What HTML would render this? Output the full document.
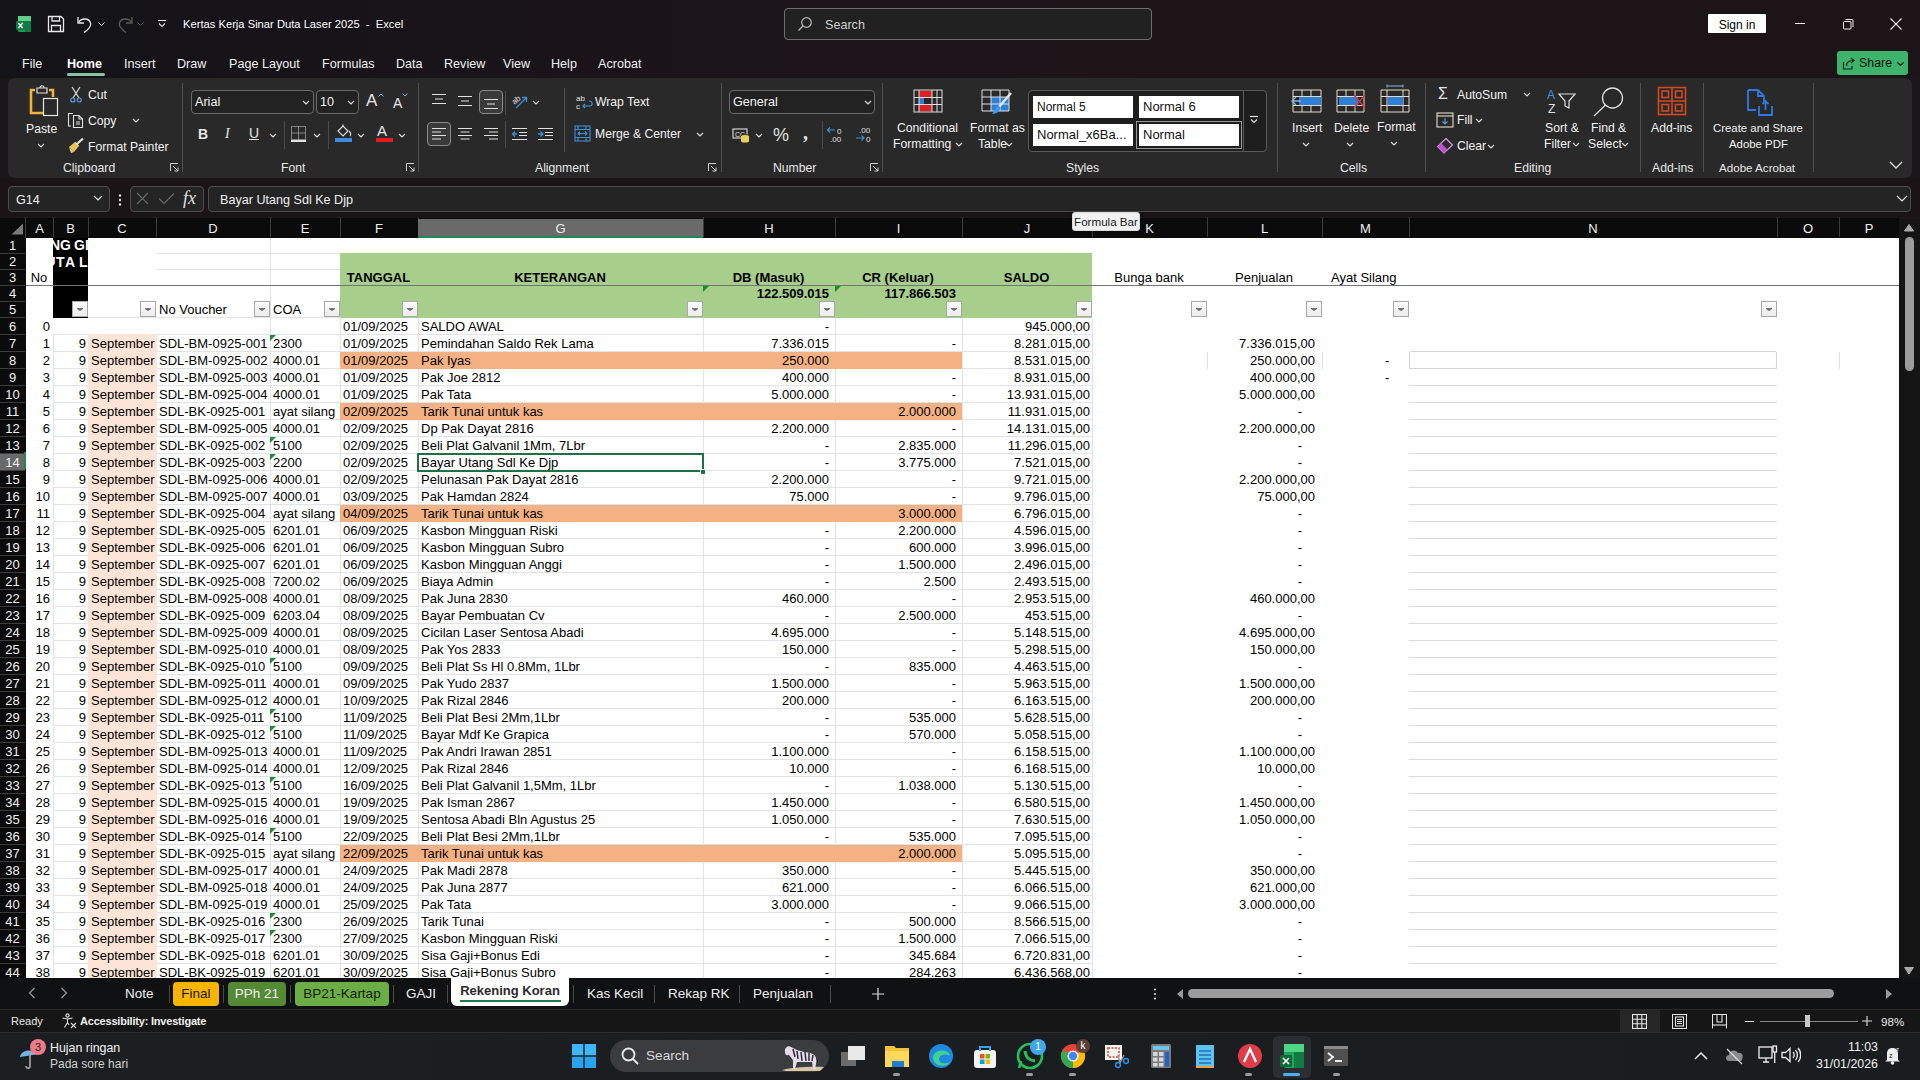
<!DOCTYPE html>
<html><head><meta charset="utf-8"><title>Excel</title>
<style>
*{box-sizing:border-box;margin:0;padding:0}
html,body{width:1920px;height:1080px;overflow:hidden;background:#1b1619;font-family:"Liberation Sans",sans-serif;}
.a{position:absolute}
#title{left:0;top:0;width:1920px;height:78px;background:linear-gradient(90deg,#131318 0%,#1a141a 30%,#1e1418 60%,#1d1418 100%)}
.tt{color:#fff;font-size:11.2px;white-space:nowrap}
.menu{color:#f0f0f0;font-size:12.6px;top:57px;white-space:nowrap}
#ribbon{left:8px;top:78px;width:1904px;height:100px;background:#292929;border-radius:7px}
.rt{color:#f2f2f2;font-size:12.2px;white-space:nowrap;line-height:14px}
.gl{color:#e8e8e8;font-size:12.2px;top:161px;white-space:nowrap;line-height:14px}
.vd{top:83px;width:1px;height:89px;background:#505050}
.chev{width:7px;height:4px}
#fbar{left:0;top:178px;width:1920px;height:39px;background:#1a1416}
.cell{position:absolute;font-size:13px;color:#000;white-space:nowrap;line-height:17px;overflow:hidden}
.r{text-align:right}
.c{text-align:center}
.hd{position:absolute;color:#f0f0f0;font-size:13px;text-align:center;line-height:18px;top:220px;height:18px}
.rh{position:absolute;left:0;width:25px;color:#f0f0f0;font-size:13px;text-align:center;background:#0b0b0b;border-bottom:1px solid #3c3c3c}
.gh{position:absolute;height:1px;background:#e2e3e6}
.gv{position:absolute;width:1px;background:#e2e3e6}
.af{position:absolute;width:16px;height:16px;background:linear-gradient(#fbfbfb,#ececec);border:1px solid #a8a8a8}
.af:after{content:"";position:absolute;left:4px;top:7px;width:0;height:0;border-left:3px solid transparent;border-right:3px solid transparent;border-top:2.5px solid #6a6a6a}
.af:before{content:"";position:absolute;left:4px;top:6px;width:6px;height:1px;background:#777}
.tri{position:absolute;width:0;height:0;border-top:6px solid #1e8a3a;border-right:6px solid transparent}
.tab{position:absolute;top:986px;font-size:13.5px;color:#f0f0f0;white-space:nowrap;line-height:16px}
.tsep{position:absolute;top:985px;width:1px;height:18px;background:#4a4a4a}

</style></head>
<body>
<div id="title" class="a">
 <!-- excel logo -->
 <svg class="a" style="left:16px;top:15px" width="16" height="18" viewBox="0 0 16 18">
  <rect x="2" y="1" width="13" height="16" rx="1.5" fill="#1f9d55"/>
  <rect x="2" y="1" width="13" height="5" fill="#5fd08a"/>
  <rect x="9" y="6" width="6" height="11" fill="#107c41"/>
  <rect x="0" y="6" width="9" height="9" rx="1" fill="#107c41"/>
  <path d="M2.3 8 L6.7 13 M6.7 8 L2.3 13" stroke="#fff" stroke-width="1.4"/>
 </svg>
 <!-- save -->
 <svg class="a" style="left:47px;top:15px" width="18" height="18" viewBox="0 0 18 18" fill="none" stroke="#e8e8e8" stroke-width="1.3">
  <path d="M1.5 1.5 H14 L16.5 4 V16.5 H1.5 Z"/><path d="M5 1.5 V6 H12.5 V1.5"/><path d="M4.5 16.5 V10.5 H13.5 V16.5"/>
 </svg>
 <!-- undo -->
 <svg class="a" style="left:76px;top:15px" width="18" height="18" viewBox="0 0 18 18" fill="none" stroke="#e8e8e8" stroke-width="1.3">
  <path d="M2 2 V8 H8"/><path d="M2.5 7.5 C5 3 13 2.5 14.5 8 C15.5 11 13 14 8 17.5"/>
 </svg>
 <svg class="a chev" style="left:98px;top:22px" viewBox="0 0 7 4"><path d="M0.5 0.5 L3.5 3.5 L6.5 0.5" stroke="#e0e0e0" fill="none" stroke-width="1"/></svg>
 <!-- redo -->
 <svg class="a" style="left:116px;top:15px" width="18" height="18" viewBox="0 0 18 18" fill="none" stroke="#5a5a5a" stroke-width="1.3">
  <path d="M16 2 V8 H10"/><path d="M15.5 7.5 C13 3 5 2.5 3.5 8 C2.5 11 5 14 10 17.5"/>
 </svg>
 <svg class="a chev" style="left:137px;top:22px" viewBox="0 0 7 4"><path d="M0.5 0.5 L3.5 3.5 L6.5 0.5" stroke="#5a5a5a" fill="none" stroke-width="1"/></svg>
 <!-- customize -->
 <svg class="a" style="left:157px;top:19px" width="10" height="10" viewBox="0 0 10 10" fill="none" stroke="#e0e0e0" stroke-width="1.1">
  <path d="M1 1.5 H9"/><path d="M2 4.5 L5 7.5 L8 4.5"/>
 </svg>
 <div class="a tt" style="left:183px;top:18px">Kertas Kerja Sinar Duta Laser 2025&nbsp;&nbsp;-&nbsp;&nbsp;Excel</div>
 <!-- search -->
 <div class="a" style="left:784px;top:8px;width:368px;height:32px;border:1px solid #6e6e6e;border-radius:4px;background:#212121"></div>
 <svg class="a" style="left:797px;top:16px" width="16" height="16" viewBox="0 0 16 16" fill="none" stroke="#bdbdbd" stroke-width="1.2">
  <circle cx="9.5" cy="6.5" r="4.8"/><path d="M6 10 L1.5 14.5"/>
 </svg>
 <div class="a tt" style="left:825px;top:18px;color:#cfcfcf;font-size:12.6px">Search</div>
 <!-- sign in -->
 <div class="a" style="left:1708px;top:14px;width:58px;height:19px;background:#fff;border-radius:1px"></div>
 <div class="a tt" style="left:1708px;top:18px;width:58px;text-align:center;color:#000;font-size:12px;line-height:15px">Sign in</div>
 <svg class="a" style="left:1793px;top:16px" width="14" height="14" viewBox="0 0 14 14"><path d="M2 7.5 H12" stroke="#eee" stroke-width="1"/></svg>
 <svg class="a" style="left:1841px;top:17px" width="14" height="14" viewBox="0 0 14 14" fill="none" stroke="#eee" stroke-width="1">
  <rect x="2.5" y="4.5" width="7.5" height="7.5" rx="1"/><path d="M4.5 2.5 H11 A1 1 0 0 1 12 3.5 V10"/>
 </svg>
 <svg class="a" style="left:1889px;top:17px" width="14" height="14" viewBox="0 0 14 14" stroke="#eee" stroke-width="1.1"><path d="M1.5 1.5 L12.5 12.5 M12.5 1.5 L1.5 12.5"/></svg>

 <!-- menu -->
 <div class="a menu" style="left:22px">File</div>
 <div class="a menu" style="left:67px;font-weight:bold;color:#fff">Home</div>
 <div class="a" style="left:67px;top:73px;width:38px;height:3px;border-radius:2px;background:#8cc2a4"></div>
 <div class="a menu" style="left:124px">Insert</div>
 <div class="a menu" style="left:177px">Draw</div>
 <div class="a menu" style="left:229px">Page Layout</div>
 <div class="a menu" style="left:322px">Formulas</div>
 <div class="a menu" style="left:396px">Data</div>
 <div class="a menu" style="left:444px">Review</div>
 <div class="a menu" style="left:503px">View</div>
 <div class="a menu" style="left:551px">Help</div>
 <div class="a menu" style="left:598px">Acrobat</div>
 <!-- share -->
 <div class="a" style="left:1837px;top:51px;width:71px;height:24px;background:#3db36b;border-radius:3px"></div>
 <svg class="a" style="left:1841px;top:55px" width="16" height="16" viewBox="0 0 16 16" fill="none" stroke="#10261a" stroke-width="1.2">
  <path d="M2.5 7 V14 H11 V11"/><path d="M5.5 11 C5.5 7 8.5 5.5 12 5.5"/><path d="M10 3 L13 5.5 L10 8"/>
 </svg>
 <div class="a tt" style="left:1859px;top:56px;color:#111;font-size:12.4px">Share</div>
 <svg class="a chev" style="left:1897px;top:62px" viewBox="0 0 7 4"><path d="M0.5 0.5 L3.5 3.5 L6.5 0.5" stroke="#111" fill="none" stroke-width="1.1"/></svg>
</div>

<div id="ribbon" class="a"></div>
<div id="ribbon-content">
 <!-- ===== Clipboard ===== -->
<svg class="a" style="left:28px;top:85px" width="32" height="34" viewBox="0 0 32 34">
 <path d="M7 5 H3 V28 H16" fill="none" stroke="#f0b43c" stroke-width="2.6"/>
 <path d="M21 5 H25 V12" fill="none" stroke="#f0b43c" stroke-width="2.6"/>
 <path d="M9 3 H19 V8 H9 Z" fill="none" stroke="#e0e0e0" stroke-width="1.2"/>
 <path d="M12 3 C12 0 16 0 16 3" fill="none" stroke="#e0e0e0" stroke-width="1.2"/>
 <rect x="15.5" y="13.5" width="14" height="17" fill="#292929" stroke="#e6e6e6" stroke-width="1.2"/>
</svg>
<div class="a rt" style="left:26px;top:122px">Paste</div>
<svg class="a" style="left:37px;top:143px" width="8" height="5" viewBox="0 0 8 5"><path d="M1 1 L4 4 L7 1" stroke="#ddd" fill="none" stroke-width="1.2"/></svg>
<svg class="a" style="left:70px;top:86px" width="12" height="17" viewBox="0 0 12 17" fill="none" stroke-width="1.2">
 <path d="M2 1 L9 12 M10 1 L3 12" stroke="#e0e0e0"/><circle cx="2.8" cy="14" r="2" stroke="#5aa0e0"/><circle cx="9.2" cy="14" r="2" stroke="#5aa0e0"/>
</svg>
<div class="a rt" style="left:88px;top:88px">Cut</div>
<svg class="a" style="left:67px;top:111px" width="18" height="18" viewBox="0 0 18 18" fill="none" stroke="#e0e0e0" stroke-width="1.1">
 <path d="M6 2.5 H1.5 V15 H4"/><path d="M6.5 4.5 H12 L15.5 8 V16.5 H6.5 Z"/><path d="M12 4.5 V8 H15.5"/><path d="M9 11 H13 M9 13 H13"/>
</svg>
<div class="a rt" style="left:88px;top:114px">Copy</div>
<svg class="a" style="left:132px;top:118px" width="8" height="5" viewBox="0 0 8 5"><path d="M1 1 L4 4 L7 1" stroke="#ddd" fill="none" stroke-width="1.2"/></svg>
<svg class="a" style="left:67px;top:137px" width="18" height="17" viewBox="0 0 18 17">
 <path d="M2 10 L8 5 L12 9 L7 15 Z" fill="#e8c25a"/><path d="M8 5 L12 9" stroke="#fff" stroke-width="1"/>
 <path d="M10 7 L16 1.5" stroke="#e0e0e0" stroke-width="2.2"/><path d="M2 10 L4 16 L7 15" fill="#f0d080"/>
</svg>
<div class="a rt" style="left:88px;top:140px">Format Painter</div>
<div class="a gl" style="left:63px">Clipboard</div>
<svg class="a" style="left:170px;top:163px" width="9" height="9" viewBox="0 0 9 9" fill="none" stroke="#cfcfcf" stroke-width="1"><path d="M0.5 8 V0.5 H8"/><path d="M3 3 L8 8 M8 4.5 V8 H4.5"/></svg>
<div class="a vd" style="left:182px"></div>

<!-- ===== Font ===== -->
<div class="a" style="left:191px;top:90px;width:123px;height:24px;border:1px solid #6a6a6a;border-radius:4px;background:#222"></div>
<div class="a rt" style="left:195px;top:95px;font-size:12.6px">Arial</div>
<svg class="a" style="left:302px;top:100px" width="8" height="5" viewBox="0 0 8 5"><path d="M1 1 L4 4 L7 1" stroke="#ddd" fill="none" stroke-width="1.2"/></svg>
<div class="a" style="left:316px;top:90px;width:43px;height:24px;border:1px solid #6a6a6a;border-radius:4px;background:#222"></div>
<div class="a rt" style="left:320px;top:95px;font-size:12.6px">10</div>
<svg class="a" style="left:347px;top:100px" width="8" height="5" viewBox="0 0 8 5"><path d="M1 1 L4 4 L7 1" stroke="#ddd" fill="none" stroke-width="1.2"/></svg>
<div class="a" style="left:366px;top:91px;font-size:17px;color:#e6e6e6;line-height:20px">A</div>
<svg class="a" style="left:378px;top:93px" width="6" height="4" viewBox="0 0 6 4"><path d="M0.5 3.5 L3 1 L5.5 3.5" stroke="#8ab4e0" fill="none" stroke-width="1"/></svg>
<div class="a" style="left:393px;top:94px;font-size:14px;color:#e6e6e6;line-height:18px">A</div>
<svg class="a" style="left:402px;top:93px" width="6" height="4" viewBox="0 0 6 4"><path d="M0.5 0.5 L3 3 L5.5 0.5" stroke="#8ab4e0" fill="none" stroke-width="1"/></svg>
<div class="a" style="left:198px;top:126px;font-size:14px;font-weight:bold;color:#e6e6e6;line-height:16px">B</div>
<div class="a" style="left:225px;top:126px;font-size:14px;font-style:italic;font-family:'Liberation Serif',serif;color:#e6e6e6;line-height:16px">I</div>
<div class="a" style="left:249px;top:125px;font-size:14px;color:#e6e6e6;line-height:16px;text-decoration:underline">U</div>
<svg class="a" style="left:269px;top:133px" width="8" height="5" viewBox="0 0 8 5"><path d="M1 1 L4 4 L7 1" stroke="#ddd" fill="none" stroke-width="1.2"/></svg>
<div class="a" style="left:284px;top:121px;width:1px;height:28px;background:#4a4a4a"></div>
<svg class="a" style="left:290px;top:125px" width="17" height="17" viewBox="0 0 17 17" fill="none" stroke="#d8d8d8" stroke-width="1" stroke-dasharray="1 1">
 <rect x="1.5" y="1.5" width="14" height="13"/><path d="M8.5 1.5 V14.5 M1.5 8 H15.5"/>
</svg>
<div class="a" style="left:291px;top:140px;width:15px;height:1.5px;background:#e0e0e0"></div>
<svg class="a" style="left:313px;top:133px" width="8" height="5" viewBox="0 0 8 5"><path d="M1 1 L4 4 L7 1" stroke="#ddd" fill="none" stroke-width="1.2"/></svg>
<div class="a" style="left:328px;top:121px;width:1px;height:28px;background:#4a4a4a"></div>
<svg class="a" style="left:335px;top:124px" width="18" height="14" viewBox="0 0 18 14" fill="none" stroke="#e0e0e0" stroke-width="1.1">
 <path d="M3 7 L8 2 L13 7 L8 12 Z"/><path d="M8 2 V0.5"/><path d="M14 7 C16 9 16 11 15 12"/>
</svg>
<div class="a" style="left:335px;top:138px;width:17px;height:4px;background:#3c8ee0"></div>
<svg class="a" style="left:357px;top:133px" width="8" height="5" viewBox="0 0 8 5"><path d="M1 1 L4 4 L7 1" stroke="#ddd" fill="none" stroke-width="1.2"/></svg>
<div class="a" style="left:377px;top:123px;font-size:15px;color:#e6e6e6;line-height:16px">A</div>
<div class="a" style="left:376px;top:138px;width:17px;height:4px;background:#e81c1c"></div>
<svg class="a" style="left:398px;top:133px" width="8" height="5" viewBox="0 0 8 5"><path d="M1 1 L4 4 L7 1" stroke="#ddd" fill="none" stroke-width="1.2"/></svg>
<div class="a gl" style="left:281px">Font</div>
<svg class="a" style="left:406px;top:163px" width="9" height="9" viewBox="0 0 9 9" fill="none" stroke="#cfcfcf" stroke-width="1"><path d="M0.5 8 V0.5 H8"/><path d="M3 3 L8 8 M8 4.5 V8 H4.5"/></svg>
<div class="a vd" style="left:418px"></div>

<!-- ===== Alignment ===== -->
<svg class="a" style="left:431px;top:93px" width="16" height="12" viewBox="0 0 16 12" stroke="#e0e0e0" stroke-width="1.1"><path d="M1 1.5 H15 M4 6 H12 M1 10.5 H15"/></svg>
<svg class="a" style="left:457px;top:95px" width="16" height="12" viewBox="0 0 16 12" stroke="#e0e0e0" stroke-width="1.1"><path d="M1 1.5 H15 M4 6 H12 M1 10.5 H15"/></svg>
<div class="a" style="left:479px;top:90px;width:24px;height:24px;border:1px solid #8a8a8a;border-radius:4px;background:#3a3a3a"></div>
<svg class="a" style="left:483px;top:98px" width="16" height="12" viewBox="0 0 16 12" stroke="#e0e0e0" stroke-width="1.1"><path d="M1 1.5 H15 M4 6 H12 M1 10.5 H15"/></svg>
<div class="a" style="left:505px;top:91px;width:1px;height:24px;background:#4a4a4a"></div>
<svg class="a" style="left:511px;top:92px" width="18" height="18" viewBox="0 0 18 18">
 <text x="1" y="10" font-size="8" font-family="Liberation Sans" fill="#e0e0e0" transform="rotate(-40 6 8)">ab</text>
 <path d="M5 16 L15 6 M11 5.5 H15.5 V10" stroke="#3d8fd8" stroke-width="1.3" fill="none"/>
</svg>
<svg class="a" style="left:532px;top:100px" width="8" height="5" viewBox="0 0 8 5"><path d="M1 1 L4 4 L7 1" stroke="#ddd" fill="none" stroke-width="1.2"/></svg>
<div class="a" style="left:427px;top:122px;width:24px;height:24px;border:1px solid #8a8a8a;border-radius:4px;background:#3a3a3a"></div>
<svg class="a" style="left:431px;top:127px" width="16" height="14" viewBox="0 0 16 14" stroke="#e0e0e0" stroke-width="1.1"><path d="M1 1.5 H15 M1 5 H10 M1 8.5 H15 M1 12 H10"/></svg>
<svg class="a" style="left:457px;top:127px" width="16" height="14" viewBox="0 0 16 14" stroke="#e0e0e0" stroke-width="1.1"><path d="M1 1.5 H15 M3.5 5 H12.5 M1 8.5 H15 M3.5 12 H12.5"/></svg>
<svg class="a" style="left:483px;top:127px" width="16" height="14" viewBox="0 0 16 14" stroke="#e0e0e0" stroke-width="1.1"><path d="M1 1.5 H15 M6 5 H15 M1 8.5 H15 M6 12 H15"/></svg>
<div class="a" style="left:505px;top:121px;width:1px;height:27px;background:#4a4a4a"></div>
<svg class="a" style="left:511px;top:127px" width="17" height="14" viewBox="0 0 17 14" fill="none" stroke-width="1.1"><path d="M1 1.5 H16 M8 5.5 H16 M8 8.5 H16 M1 12.5 H16" stroke="#e0e0e0"/><path d="M6 7 H1.5 M4 4.5 L1.5 7 L4 9.5" stroke="#3d8fd8" stroke-width="1.3"/></svg>
<svg class="a" style="left:537px;top:127px" width="17" height="14" viewBox="0 0 17 14" fill="none" stroke-width="1.1"><path d="M1 1.5 H16 M8 5.5 H16 M8 8.5 H16 M1 12.5 H16" stroke="#e0e0e0"/><path d="M1 7 H6 M3.5 4.5 L6 7 L3.5 9.5" stroke="#3d8fd8" stroke-width="1.3"/></svg>
<div class="a vd" style="left:564px;top:88px;height:64px"></div>
<svg class="a" style="left:576px;top:94px" width="18" height="17" viewBox="0 0 18 17">
 <text x="0" y="7" font-size="8" font-family="Liberation Sans" fill="#e0e0e0">ab</text><text x="0" y="15" font-size="8" font-family="Liberation Sans" fill="#e0e0e0">c</text>
 <path d="M7 12 H14 C17 12 17 7 13 7 M9 10 L7 12 L9 14" stroke="#3d8fd8" stroke-width="1.2" fill="none"/>
</svg>
<div class="a rt" style="left:595px;top:95px">Wrap Text</div>
<svg class="a" style="left:574px;top:125px" width="17" height="17" viewBox="0 0 17 17" fill="none" stroke="#3d8fd8" stroke-width="1.1">
 <rect x="1" y="1" width="15" height="15"/><path d="M1 4.5 H16 M1 12.5 H16 M4 4.5 V1 M12 4.5 V1 M4 12.5 V16 M12 12.5 V16"/><path d="M4 8.5 H13 M6 6.5 L4 8.5 L6 10.5 M11 6.5 L13 8.5 L11 10.5"/>
</svg>
<div class="a rt" style="left:595px;top:127px">Merge &amp; Center</div>
<svg class="a" style="left:696px;top:132px" width="8" height="5" viewBox="0 0 8 5"><path d="M1 1 L4 4 L7 1" stroke="#ddd" fill="none" stroke-width="1.2"/></svg>
<div class="a gl" style="left:535px">Alignment</div>
<svg class="a" style="left:708px;top:163px" width="9" height="9" viewBox="0 0 9 9" fill="none" stroke="#cfcfcf" stroke-width="1"><path d="M0.5 8 V0.5 H8"/><path d="M3 3 L8 8 M8 4.5 V8 H4.5"/></svg>
<div class="a vd" style="left:721px"></div>

<!-- ===== Number ===== -->
<div class="a" style="left:729px;top:90px;width:146px;height:24px;border:1px solid #6a6a6a;border-radius:4px;background:#222"></div>
<div class="a rt" style="left:733px;top:95px;font-size:12.6px">General</div>
<svg class="a" style="left:864px;top:100px" width="8" height="5" viewBox="0 0 8 5"><path d="M1 1 L4 4 L7 1" stroke="#ddd" fill="none" stroke-width="1.2"/></svg>
<svg class="a" style="left:732px;top:127px" width="18" height="16" viewBox="0 0 18 16" fill="none" stroke-width="1.1">
 <rect x="1" y="2" width="14" height="9" stroke="#e0e0e0"/><text x="3" y="9.5" font-size="7" font-family="Liberation Sans" fill="#e0e0e0" stroke="none">CC</text>
 <ellipse cx="13" cy="9" rx="4" ry="1.5" fill="#e8d060" stroke="#292929" stroke-width="0.8"/><rect x="9" y="9" width="8" height="5" fill="#e8d060"/><ellipse cx="13" cy="14" rx="4" ry="1.5" fill="#e8d060"/>
</svg>
<svg class="a" style="left:755px;top:133px" width="8" height="5" viewBox="0 0 8 5"><path d="M1 1 L4 4 L7 1" stroke="#ddd" fill="none" stroke-width="1.2"/></svg>
<div class="a" style="left:773px;top:125px;font-size:18px;color:#e0e0e0;line-height:20px">%</div>
<div class="a" style="left:803px;top:122px;font-size:20px;font-weight:bold;font-family:'Liberation Serif',serif;color:#e0e0e0;line-height:20px">,</div>
<div class="a" style="left:822px;top:121px;width:1px;height:28px;background:#4a4a4a"></div>
<svg class="a" style="left:826px;top:125px" width="20" height="18" viewBox="0 0 20 18">
 <path d="M9 5 H1.5 M4 2.5 L1.5 5 L4 7.5" stroke="#3d8fd8" stroke-width="1.2" fill="none"/>
 <text x="11" y="9" font-size="8" font-family="Liberation Sans" fill="#e0e0e0">0</text><text x="4" y="17" font-size="8" font-family="Liberation Sans" fill="#e0e0e0">.00</text>
</svg>
<svg class="a" style="left:855px;top:125px" width="20" height="18" viewBox="0 0 20 18">
 <text x="4" y="8" font-size="8" font-family="Liberation Sans" fill="#e0e0e0">.00</text>
 <path d="M1 13 H9 M6.5 10.5 L9 13 L6.5 15.5" stroke="#3d8fd8" stroke-width="1.2" fill="none"/>
 <text x="11" y="17" font-size="8" font-family="Liberation Sans" fill="#e0e0e0">0</text>
</svg>
<div class="a gl" style="left:773px">Number</div>
<svg class="a" style="left:870px;top:163px" width="9" height="9" viewBox="0 0 9 9" fill="none" stroke="#cfcfcf" stroke-width="1"><path d="M0.5 8 V0.5 H8"/><path d="M3 3 L8 8 M8 4.5 V8 H4.5"/></svg>
<div class="a vd" style="left:882px"></div>

<!-- ===== Styles ===== -->
<svg class="a" style="left:913px;top:89px" width="30" height="24" viewBox="0 0 30 24">
 <rect x="1" y="1" width="28" height="22" fill="#2a2a2a" stroke="#e0e0e0" stroke-width="1"/>
 <rect x="6" y="2" width="13" height="6" fill="#e02020"/><rect x="6" y="9" width="5" height="6" fill="#2d7fd8"/><rect x="12" y="9" width="7" height="6" fill="#292929"/><rect x="6" y="16" width="13" height="6" fill="#e02020"/>
 <path d="M1 8.5 H29 M1 15.5 H29 M6 1 V23 M19 1 V23 M24 1 V23" stroke="#e0e0e0" stroke-width="1"/>
</svg>
<div class="a rt" style="left:897px;top:121px">Conditional</div>
<div class="a rt" style="left:893px;top:137px">Formatting</div>
<svg class="a" style="left:955px;top:142px" width="8" height="5" viewBox="0 0 8 5"><path d="M1 1 L4 4 L7 1" stroke="#ddd" fill="none" stroke-width="1.2"/></svg>
<svg class="a" style="left:981px;top:89px" width="32" height="28" viewBox="0 0 32 28">
 <rect x="10" y="8" width="18" height="14" fill="#2d7fd8"/>
 <path d="M1 1 H28 V22 H1 Z M1 8 H28 M1 15 H28 M10 1 V22 M19 1 V22" stroke="#e0e0e0" stroke-width="1" fill="none"/>
 <path d="M30 4 L18 18" stroke="#e6e6e6" stroke-width="2.4"/><path d="M18 17 C14 18 14 22 11 25 C16 25 20 22 19 18 Z" fill="#3d9af0"/>
</svg>
<div class="a rt" style="left:970px;top:121px">Format as</div>
<div class="a rt" style="left:978px;top:137px">Table</div>
<svg class="a" style="left:1005px;top:142px" width="8" height="5" viewBox="0 0 8 5"><path d="M1 1 L4 4 L7 1" stroke="#ddd" fill="none" stroke-width="1.2"/></svg>
<div class="a" style="left:1028px;top:90px;width:239px;height:62px;border:1px solid #5a5a5a;border-radius:4px;background:#1e1e1e"></div>
<div class="a" style="left:1033px;top:96px;width:100px;height:22px;background:#fff"></div>
<div class="a" style="left:1037px;top:100px;font-size:12px;color:#111;line-height:14px">Normal 5</div>
<div class="a" style="left:1139px;top:96px;width:100px;height:22px;background:#fff"></div>
<div class="a" style="left:1143px;top:99px;font-size:13px;color:#111;line-height:16px">Normal 6</div>
<div class="a" style="left:1033px;top:124px;width:100px;height:22px;background:#fff"></div>
<div class="a" style="left:1037px;top:127px;font-size:13px;color:#111;line-height:16px;white-space:nowrap">Normal_x6Ba...</div>
<div class="a" style="left:1136px;top:121px;width:106px;height:28px;border:1px solid #9a9a9a"></div>
<div class="a" style="left:1139px;top:124px;width:100px;height:22px;background:#fff"></div>
<div class="a" style="left:1143px;top:127px;font-size:13px;color:#111;line-height:16px">Normal</div>
<div class="a" style="left:1243px;top:90px;width:1px;height:62px;background:#5a5a5a"></div>
<svg class="a" style="left:1249px;top:115px" width="10" height="10" viewBox="0 0 10 10" fill="none" stroke="#e0e0e0" stroke-width="1.2"><path d="M1 1.5 H9"/><path d="M2 4.5 L5 7.5 L8 4.5"/></svg>
<div class="a gl" style="left:1066px">Styles</div>
<div class="a vd" style="left:1277px"></div>

<!-- ===== Cells ===== -->
<svg class="a" style="left:1291px;top:89px" width="32" height="24" viewBox="0 0 32 24">
 <path d="M2 1 H30 V23 H2 Z M2 7.5 H30 M2 16.5 H30 M11 1 V23 M20 1 V23" stroke="#e8dcc8" stroke-width="1" fill="none"/>
 <rect x="8" y="8" width="22" height="8" fill="#2d7fd8"/><path d="M10 12 H1 M5 8 L1 12 L5 16" stroke="#8ab4e0" stroke-width="1.3" fill="none"/>
</svg>
<div class="a rt" style="left:1292px;top:121px">Insert</div>
<svg class="a" style="left:1302px;top:142px" width="8" height="5" viewBox="0 0 8 5"><path d="M1 1 L4 4 L7 1" stroke="#ddd" fill="none" stroke-width="1.2"/></svg>
<svg class="a" style="left:1336px;top:89px" width="32" height="24" viewBox="0 0 32 24">
 <path d="M1 1 H28 V23 H1 Z M1 7.5 H28 M1 16.5 H28 M10 1 V23 M19 1 V23" stroke="#e8dcc8" stroke-width="1" fill="none"/>
 <rect x="3" y="8" width="19" height="8" fill="#2d7fd8"/><path d="M18 6 L29 19 M29 6 L18 19" stroke="#e03040" stroke-width="1.3"/>
</svg>
<div class="a rt" style="left:1334px;top:121px">Delete</div>
<svg class="a" style="left:1346px;top:142px" width="8" height="5" viewBox="0 0 8 5"><path d="M1 1 L4 4 L7 1" stroke="#ddd" fill="none" stroke-width="1.2"/></svg>
<svg class="a" style="left:1380px;top:84px" width="30" height="29" viewBox="0 0 30 29">
 <path d="M7 2 H23 M7 0.5 V3.5 M23 0.5 V3.5" stroke="#8ab4e0" stroke-width="1"/>
 <path d="M1 6 H29 V28 H1 Z M1 12.5 H29 M1 21.5 H29 M7 6 V28 M23 6 V28" stroke="#e8dcc8" stroke-width="1" fill="none"/>
 <rect x="8" y="13" width="15" height="8" fill="#2d7fd8"/>
</svg>
<div class="a rt" style="left:1377px;top:120px">Format</div>
<svg class="a" style="left:1390px;top:141px" width="8" height="5" viewBox="0 0 8 5"><path d="M1 1 L4 4 L7 1" stroke="#ddd" fill="none" stroke-width="1.2"/></svg>
<div class="a gl" style="left:1340px">Cells</div>
<div class="a vd" style="left:1425px"></div>

<!-- ===== Editing ===== -->
<div class="a" style="left:1438px;top:85px;font-size:16px;color:#e6e6e6;line-height:18px">&#931;</div>
<div class="a rt" style="left:1457px;top:88px">AutoSum</div>
<svg class="a" style="left:1523px;top:92px" width="8" height="5" viewBox="0 0 8 5"><path d="M1 1 L4 4 L7 1" stroke="#ddd" fill="none" stroke-width="1.2"/></svg>
<svg class="a" style="left:1436px;top:112px" width="18" height="16" viewBox="0 0 18 16" fill="none" stroke-width="1.1">
 <rect x="1" y="1" width="16" height="14" stroke="#e8dcc8"/><path d="M1 4 H17" stroke="#e8dcc8"/><path d="M9 6 V12 M6.5 9.5 L9 12 L11.5 9.5" stroke="#5aa0e0"/>
</svg>
<div class="a rt" style="left:1457px;top:113px">Fill</div>
<svg class="a" style="left:1475px;top:118px" width="8" height="5" viewBox="0 0 8 5"><path d="M1 1 L4 4 L7 1" stroke="#ddd" fill="none" stroke-width="1.2"/></svg>
<svg class="a" style="left:1436px;top:137px" width="18" height="17" viewBox="0 0 18 17">
 <path d="M10 1.5 L16.5 8 L8 16 L1.5 9.5 Z" fill="none" stroke="#d8a0e8" stroke-width="1.1"/><path d="M5 6 L11.5 12.5 L8 16 L1.5 9.5 Z" fill="#c050d0"/>
</svg>
<div class="a rt" style="left:1457px;top:139px">Clear</div>
<svg class="a" style="left:1487px;top:144px" width="8" height="5" viewBox="0 0 8 5"><path d="M1 1 L4 4 L7 1" stroke="#ddd" fill="none" stroke-width="1.2"/></svg>
<svg class="a" style="left:1547px;top:87px" width="32" height="28" viewBox="0 0 32 28">
 <text x="0" y="12" font-size="12" font-family="Liberation Sans" fill="#4a90e0">A</text><text x="1" y="26" font-size="12" font-family="Liberation Sans" fill="#e0e0e0">Z</text>
 <path d="M12 7 H28 L22 14 V21 L18 19 V14 Z" fill="none" stroke="#e0e0e0" stroke-width="1.2"/>
</svg>
<div class="a rt" style="left:1545px;top:121px">Sort &amp;</div>
<div class="a rt" style="left:1544px;top:137px">Filter</div>
<svg class="a" style="left:1572px;top:142px" width="8" height="5" viewBox="0 0 8 5"><path d="M1 1 L4 4 L7 1" stroke="#ddd" fill="none" stroke-width="1.2"/></svg>
<svg class="a" style="left:1593px;top:86px" width="32" height="31" viewBox="0 0 32 31" fill="none" stroke="#e0e0e0" stroke-width="1.3">
 <circle cx="19.5" cy="12" r="10"/><path d="M12.5 19 L1 30"/>
</svg>
<div class="a rt" style="left:1591px;top:121px">Find &amp;</div>
<div class="a rt" style="left:1588px;top:137px">Select</div>
<svg class="a" style="left:1621px;top:142px" width="8" height="5" viewBox="0 0 8 5"><path d="M1 1 L4 4 L7 1" stroke="#ddd" fill="none" stroke-width="1.2"/></svg>
<div class="a gl" style="left:1514px">Editing</div>
<div class="a vd" style="left:1640px"></div>

<!-- ===== Add-ins ===== -->
<svg class="a" style="left:1657px;top:86px" width="30" height="30" viewBox="0 0 30 30" fill="none" stroke="#d04a24" stroke-width="1.6">
 <rect x="1.5" y="1.5" width="27" height="27"/><path d="M15 1.5 V28.5 M1.5 15 H28.5"/><rect x="5" y="5" width="6.5" height="6.5"/><rect x="18.5" y="5" width="6.5" height="6.5"/><rect x="5" y="18.5" width="6.5" height="6.5"/><rect x="18.5" y="18.5" width="6.5" height="6.5"/>
</svg>
<div class="a rt" style="left:1651px;top:121px">Add-ins</div>
<div class="a gl" style="left:1652px">Add-ins</div>
<div class="a vd" style="left:1703px"></div>

<!-- ===== Acrobat ===== -->
<svg class="a" style="left:1746px;top:88px" width="28" height="30" viewBox="0 0 28 30" fill="none" stroke="#2f78e0" stroke-width="1.8">
 <path d="M2 2 H12 L18 8 V15 M2 2 V22 H10"/><path d="M12 2 V8 H18"/><path d="M13 18 V27 H26 V18"/><path d="M19.5 22 V13 M16.5 16 L19.5 13 L22.5 16"/>
</svg>
<div class="a rt" style="left:1713px;top:121px;font-size:11.4px">Create and Share</div>
<div class="a rt" style="left:1729px;top:137px;font-size:11.4px">Adobe PDF</div>
<div class="a gl" style="left:1719px;font-size:11.6px">Adobe Acrobat</div>
<div class="a vd" style="left:1813px"></div>
<svg class="a" style="left:1889px;top:161px" width="14" height="8" viewBox="0 0 14 8"><path d="M1 1 L7 7 L13 1" stroke="#e0e0e0" fill="none" stroke-width="1.3"/></svg>

</div>

<div id="fbar" class="a">
 <div class="a" style="left:8px;top:8px;width:102px;height:26px;border:1px solid #4d4d4d;border-radius:4px;background:#242424"></div>
 <div class="a tt" style="left:16px;top:15px;font-size:12.6px;color:#f0f0f0">G14</div>
 <svg class="a" style="left:93px;top:17px" width="10" height="7" viewBox="0 0 10 7"><path d="M1 1 L5 5 L9 1" stroke="#e6e6e6" fill="none" stroke-width="1.2"/></svg>
 <svg class="a" style="left:118px;top:14px" width="4" height="16" viewBox="0 0 4 16"><circle cx="2" cy="3.5" r="1.2" fill="#ddd"/><circle cx="2" cy="8" r="1.2" fill="#ddd"/><circle cx="2" cy="12.5" r="1.2" fill="#ddd"/></svg>
 <div class="a" style="left:130px;top:8px;width:74px;height:26px;border:1px solid #4d4d4d;border-radius:4px;background:#242424"></div>
 <svg class="a" style="left:136px;top:14px" width="13" height="13" viewBox="0 0 13 13" stroke="#6a6a6a" stroke-width="1.1"><path d="M1 1 L12 12 M12 1 L1 12"/></svg>
 <svg class="a" style="left:158px;top:14px" width="17" height="13" viewBox="0 0 17 13" fill="none" stroke="#6a6a6a" stroke-width="1.1"><path d="M1 6.5 L6 11.5 L16 1.5"/></svg>
 <div class="a" style="left:183px;top:10px;font-family:'Liberation Serif',serif;font-style:italic;font-size:18px;color:#e0e0e0;line-height:20px">fx</div>
 <div class="a" style="left:208px;top:8px;width:1703px;height:26px;border:1px solid #4d4d4d;border-radius:4px;background:#242424"></div>
 <div class="a tt" style="left:220px;top:15px;font-size:12.6px;color:#f0f0f0">Bayar Utang Sdl Ke Djp</div>
 <svg class="a" style="left:1896px;top:17px" width="12" height="7" viewBox="0 0 12 7"><path d="M1 1 L6 6 L11 1" stroke="#e6e6e6" fill="none" stroke-width="1.2"/></svg>
</div>

<div class="a" style="left:26px;top:238px;width:1873px;height:740px;background:#fff"></div>
<div class="a" style="left:0;top:218px;width:1899px;height:20px;background:#0b0b0b"></div>
<svg class="a" style="left:10px;top:223px" width="14" height="12" viewBox="0 0 14 12"><path d="M13 0.5 V11.5 H1.5 Z" fill="#7a7a7a"/></svg>
<div class="a" style="left:25px;top:217px;width:1px;height:21px;background:#3c3c3c"></div>
<div class="hd" style="left:26px;width:27px">A</div>
<div class="a" style="left:53px;top:217px;width:1px;height:20px;background:#3c3c3c"></div>
<div class="hd" style="left:53px;width:35px">B</div>
<div class="a" style="left:88px;top:217px;width:1px;height:20px;background:#3c3c3c"></div>
<div class="hd" style="left:88px;width:68px">C</div>
<div class="a" style="left:156px;top:217px;width:1px;height:20px;background:#3c3c3c"></div>
<div class="hd" style="left:156px;width:114px">D</div>
<div class="a" style="left:270px;top:217px;width:1px;height:20px;background:#3c3c3c"></div>
<div class="hd" style="left:270px;width:70px">E</div>
<div class="a" style="left:340px;top:217px;width:1px;height:20px;background:#3c3c3c"></div>
<div class="hd" style="left:340px;width:78px">F</div>
<div class="a" style="left:418px;top:217px;width:1px;height:20px;background:#3c3c3c"></div>
<div class="a" style="left:418px;top:219px;width:285px;height:18px;background:#6a6a6a"></div>
<div class="a" style="left:418px;top:236px;width:285px;height:2px;background:#1e8a52"></div>
<div class="hd" style="left:418px;width:285px">G</div>
<div class="a" style="left:703px;top:217px;width:1px;height:20px;background:#3c3c3c"></div>
<div class="hd" style="left:703px;width:132px">H</div>
<div class="a" style="left:835px;top:217px;width:1px;height:20px;background:#3c3c3c"></div>
<div class="hd" style="left:835px;width:127px">I</div>
<div class="a" style="left:962px;top:217px;width:1px;height:20px;background:#3c3c3c"></div>
<div class="hd" style="left:962px;width:130px">J</div>
<div class="a" style="left:1092px;top:217px;width:1px;height:20px;background:#3c3c3c"></div>
<div class="hd" style="left:1092px;width:115px">K</div>
<div class="a" style="left:1207px;top:217px;width:1px;height:20px;background:#3c3c3c"></div>
<div class="hd" style="left:1207px;width:115px">L</div>
<div class="a" style="left:1322px;top:217px;width:1px;height:20px;background:#3c3c3c"></div>
<div class="hd" style="left:1322px;width:87px">M</div>
<div class="a" style="left:1409px;top:217px;width:1px;height:20px;background:#3c3c3c"></div>
<div class="hd" style="left:1409px;width:368px">N</div>
<div class="a" style="left:1777px;top:217px;width:1px;height:20px;background:#3c3c3c"></div>
<div class="hd" style="left:1777px;width:62px">O</div>
<div class="a" style="left:1839px;top:217px;width:1px;height:20px;background:#3c3c3c"></div>
<div class="hd" style="left:1839px;width:60px">P</div>
<div class="rh" style="top:238px;height:16px;line-height:16px;">1</div>
<div class="rh" style="top:254px;height:16px;line-height:16px;">2</div>
<div class="rh" style="top:270px;height:16px;line-height:16px;">3</div>
<div class="rh" style="top:286px;height:16px;line-height:16px;">4</div>
<div class="rh" style="top:302px;height:16px;line-height:16px;">5</div>
<div class="rh" style="top:318px;height:17px;line-height:17px;">6</div>
<div class="rh" style="top:335px;height:17px;line-height:17px;">7</div>
<div class="rh" style="top:352px;height:17px;line-height:17px;">8</div>
<div class="rh" style="top:369px;height:17px;line-height:17px;">9</div>
<div class="rh" style="top:386px;height:17px;line-height:17px;">10</div>
<div class="rh" style="top:403px;height:17px;line-height:17px;">11</div>
<div class="rh" style="top:420px;height:17px;line-height:17px;">12</div>
<div class="rh" style="top:437px;height:17px;line-height:17px;">13</div>
<div class="rh" style="top:454px;height:17px;line-height:17px;background:#6a6a6a;">14</div>
<div class="rh" style="top:471px;height:17px;line-height:17px;">15</div>
<div class="rh" style="top:488px;height:17px;line-height:17px;">16</div>
<div class="rh" style="top:505px;height:17px;line-height:17px;">17</div>
<div class="rh" style="top:522px;height:17px;line-height:17px;">18</div>
<div class="rh" style="top:539px;height:17px;line-height:17px;">19</div>
<div class="rh" style="top:556px;height:17px;line-height:17px;">20</div>
<div class="rh" style="top:573px;height:17px;line-height:17px;">21</div>
<div class="rh" style="top:590px;height:17px;line-height:17px;">22</div>
<div class="rh" style="top:607px;height:17px;line-height:17px;">23</div>
<div class="rh" style="top:624px;height:17px;line-height:17px;">24</div>
<div class="rh" style="top:641px;height:17px;line-height:17px;">25</div>
<div class="rh" style="top:658px;height:17px;line-height:17px;">26</div>
<div class="rh" style="top:675px;height:17px;line-height:17px;">27</div>
<div class="rh" style="top:692px;height:17px;line-height:17px;">28</div>
<div class="rh" style="top:709px;height:17px;line-height:17px;">29</div>
<div class="rh" style="top:726px;height:17px;line-height:17px;">30</div>
<div class="rh" style="top:743px;height:17px;line-height:17px;">31</div>
<div class="rh" style="top:760px;height:17px;line-height:17px;">32</div>
<div class="rh" style="top:777px;height:17px;line-height:17px;">33</div>
<div class="rh" style="top:794px;height:17px;line-height:17px;">34</div>
<div class="rh" style="top:811px;height:17px;line-height:17px;">35</div>
<div class="rh" style="top:828px;height:17px;line-height:17px;">36</div>
<div class="rh" style="top:845px;height:17px;line-height:17px;">37</div>
<div class="rh" style="top:862px;height:17px;line-height:17px;">38</div>
<div class="rh" style="top:879px;height:17px;line-height:17px;">39</div>
<div class="rh" style="top:896px;height:17px;line-height:17px;">40</div>
<div class="rh" style="top:913px;height:17px;line-height:17px;">41</div>
<div class="rh" style="top:930px;height:17px;line-height:17px;">42</div>
<div class="rh" style="top:947px;height:17px;line-height:17px;">43</div>
<div class="rh" style="top:964px;height:14px;line-height:17px;border-bottom:none;">44</div>
<div class="a" style="left:25px;top:238px;width:1px;height:740px;background:#0b0b0b"></div>
<div class="a" style="left:24px;top:452px;width:2px;height:17px;background:#1e8a52"></div>
<div class="a" style="left:340px;top:253px;width:752px;height:65px;background:#a7ce8b"></div>
<div class="a" style="left:53px;top:238px;width:35px;height:80px;background:#000"></div>
<div class="gh" style="left:53px;top:334px;width:1039px"></div>
<div class="gh" style="left:53px;top:351px;width:1039px"></div>
<div class="gh" style="left:53px;top:368px;width:1039px"></div>
<div class="gh" style="left:1409px;top:368px;width:368px;background:#dadada"></div>
<div class="gh" style="left:53px;top:385px;width:1039px"></div>
<div class="gh" style="left:1409px;top:385px;width:368px;background:#dadada"></div>
<div class="gh" style="left:53px;top:402px;width:1039px"></div>
<div class="gh" style="left:1409px;top:402px;width:368px;background:#dadada"></div>
<div class="gh" style="left:53px;top:419px;width:1039px"></div>
<div class="gh" style="left:1409px;top:419px;width:368px;background:#dadada"></div>
<div class="gh" style="left:53px;top:436px;width:1039px"></div>
<div class="gh" style="left:1409px;top:436px;width:368px;background:#dadada"></div>
<div class="gh" style="left:53px;top:453px;width:1039px"></div>
<div class="gh" style="left:1409px;top:453px;width:368px;background:#dadada"></div>
<div class="gh" style="left:53px;top:470px;width:1039px"></div>
<div class="gh" style="left:1409px;top:470px;width:368px;background:#dadada"></div>
<div class="gh" style="left:53px;top:487px;width:1039px"></div>
<div class="gh" style="left:1409px;top:487px;width:368px;background:#dadada"></div>
<div class="gh" style="left:53px;top:504px;width:1039px"></div>
<div class="gh" style="left:1409px;top:504px;width:368px;background:#dadada"></div>
<div class="gh" style="left:53px;top:521px;width:1039px"></div>
<div class="gh" style="left:1409px;top:521px;width:368px;background:#dadada"></div>
<div class="gh" style="left:53px;top:538px;width:1039px"></div>
<div class="gh" style="left:1409px;top:538px;width:368px;background:#dadada"></div>
<div class="gh" style="left:53px;top:555px;width:1039px"></div>
<div class="gh" style="left:1409px;top:555px;width:368px;background:#dadada"></div>
<div class="gh" style="left:53px;top:572px;width:1039px"></div>
<div class="gh" style="left:1409px;top:572px;width:368px;background:#dadada"></div>
<div class="gh" style="left:53px;top:589px;width:1039px"></div>
<div class="gh" style="left:1409px;top:589px;width:368px;background:#dadada"></div>
<div class="gh" style="left:53px;top:606px;width:1039px"></div>
<div class="gh" style="left:1409px;top:606px;width:368px;background:#dadada"></div>
<div class="gh" style="left:53px;top:623px;width:1039px"></div>
<div class="gh" style="left:1409px;top:623px;width:368px;background:#dadada"></div>
<div class="gh" style="left:53px;top:640px;width:1039px"></div>
<div class="gh" style="left:1409px;top:640px;width:368px;background:#dadada"></div>
<div class="gh" style="left:53px;top:657px;width:1039px"></div>
<div class="gh" style="left:1409px;top:657px;width:368px;background:#dadada"></div>
<div class="gh" style="left:53px;top:674px;width:1039px"></div>
<div class="gh" style="left:1409px;top:674px;width:368px;background:#dadada"></div>
<div class="gh" style="left:53px;top:691px;width:1039px"></div>
<div class="gh" style="left:1409px;top:691px;width:368px;background:#dadada"></div>
<div class="gh" style="left:53px;top:708px;width:1039px"></div>
<div class="gh" style="left:1409px;top:708px;width:368px;background:#dadada"></div>
<div class="gh" style="left:53px;top:725px;width:1039px"></div>
<div class="gh" style="left:1409px;top:725px;width:368px;background:#dadada"></div>
<div class="gh" style="left:53px;top:742px;width:1039px"></div>
<div class="gh" style="left:1409px;top:742px;width:368px;background:#dadada"></div>
<div class="gh" style="left:53px;top:759px;width:1039px"></div>
<div class="gh" style="left:1409px;top:759px;width:368px;background:#dadada"></div>
<div class="gh" style="left:53px;top:776px;width:1039px"></div>
<div class="gh" style="left:1409px;top:776px;width:368px;background:#dadada"></div>
<div class="gh" style="left:53px;top:793px;width:1039px"></div>
<div class="gh" style="left:1409px;top:793px;width:368px;background:#dadada"></div>
<div class="gh" style="left:53px;top:810px;width:1039px"></div>
<div class="gh" style="left:1409px;top:810px;width:368px;background:#dadada"></div>
<div class="gh" style="left:53px;top:827px;width:1039px"></div>
<div class="gh" style="left:1409px;top:827px;width:368px;background:#dadada"></div>
<div class="gh" style="left:53px;top:844px;width:1039px"></div>
<div class="gh" style="left:1409px;top:844px;width:368px;background:#dadada"></div>
<div class="gh" style="left:53px;top:861px;width:1039px"></div>
<div class="gh" style="left:1409px;top:861px;width:368px;background:#dadada"></div>
<div class="gh" style="left:53px;top:878px;width:1039px"></div>
<div class="gh" style="left:1409px;top:878px;width:368px;background:#dadada"></div>
<div class="gh" style="left:53px;top:895px;width:1039px"></div>
<div class="gh" style="left:1409px;top:895px;width:368px;background:#dadada"></div>
<div class="gh" style="left:53px;top:912px;width:1039px"></div>
<div class="gh" style="left:1409px;top:912px;width:368px;background:#dadada"></div>
<div class="gh" style="left:53px;top:929px;width:1039px"></div>
<div class="gh" style="left:1409px;top:929px;width:368px;background:#dadada"></div>
<div class="gh" style="left:53px;top:946px;width:1039px"></div>
<div class="gh" style="left:1409px;top:946px;width:368px;background:#dadada"></div>
<div class="gh" style="left:53px;top:963px;width:1039px"></div>
<div class="gh" style="left:1409px;top:963px;width:368px;background:#dadada"></div>
<div class="a" style="left:1409px;top:351px;width:368px;height:18px;border:1px solid #d4d4d4;border-radius:2px;background:#fff"></div>
<div class="gv" style="left:1207px;top:352px;height:17px;background:#e0e0e0"></div>
<div class="gv" style="left:1322px;top:352px;height:17px;background:#e0e0e0"></div>
<div class="gv" style="left:1839px;top:352px;height:17px;background:#e0e0e0"></div>
<div class="gv" style="left:270px;top:318px;height:660px"></div>
<div class="gv" style="left:340px;top:318px;height:660px"></div>
<div class="gv" style="left:418px;top:318px;height:660px"></div>
<div class="gv" style="left:703px;top:318px;height:660px"></div>
<div class="gv" style="left:835px;top:318px;height:660px"></div>
<div class="gv" style="left:962px;top:318px;height:660px"></div>
<div class="gv" style="left:1092px;top:318px;height:660px"></div>
<div class="gv" style="left:53px;top:335px;height:643px"></div>
<div class="a" style="left:340px;top:352px;width:622px;height:17px;background:#f4b183"></div>
<div class="a" style="left:340px;top:403px;width:622px;height:17px;background:#f4b183"></div>
<div class="a" style="left:340px;top:505px;width:622px;height:17px;background:#f4b183"></div>
<div class="a" style="left:340px;top:845px;width:622px;height:17px;background:#f4b183"></div>
<div class="a" style="left:88px;top:334px;width:69px;height:644px;background:#fce4d6"></div>
<div class="gh" style="left:156px;top:253px;width:184px"></div>
<div class="gh" style="left:156px;top:269px;width:184px"></div>
<div class="gv" style="left:270px;top:238px;height:80px"></div>
<div class="gh" style="left:88px;top:317px;width:252px"></div>
<div class="a" style="left:26px;top:285px;width:1873px;height:1px;background:#747474"></div>
<div class="cell c" style="left:26px;top:270px;width:27px;height:16px;line-height:16px;padding:0 4px 0 3px;">No</div>
<div class="cell" style="left:53px;top:238px;width:35px;height:32px;line-height:16px;color:#fff;font-weight:bold;font-size:14px;overflow:hidden"><div style="position:absolute;left:-3px;top:-1px">NG</div><div style="position:absolute;left:21px;top:-1px">GIRO</div><div style="position:absolute;left:-17px;top:16px;font-size:13.5px">DU</div><div style="position:absolute;left:3px;top:16px;font-size:14px;letter-spacing:1.5px">TA</div><div style="position:absolute;left:26px;top:16px;font-size:14px">LASER</div></div>
<div class="cell " style="left:156px;top:302px;width:114px;height:16px;line-height:16px;padding:0 4px 0 3px;">No Voucher</div>
<div class="cell " style="left:270px;top:302px;width:70px;height:16px;line-height:16px;padding:0 4px 0 3px;">COA</div>
<div class="cell c" style="left:340px;top:270px;width:78px;height:16px;line-height:16px;padding:0 4px 0 3px;font-weight:bold">TANGGAL</div>
<div class="cell c" style="left:418px;top:270px;width:285px;height:16px;line-height:16px;padding:0 4px 0 3px;font-weight:bold">KETERANGAN</div>
<div class="cell c" style="left:703px;top:270px;width:132px;height:16px;line-height:16px;padding:0 4px 0 3px;font-weight:bold">DB (Masuk)</div>
<div class="cell c" style="left:835px;top:270px;width:127px;height:16px;line-height:16px;padding:0 4px 0 3px;font-weight:bold">CR (Keluar)</div>
<div class="cell c" style="left:962px;top:270px;width:130px;height:16px;line-height:16px;padding:0 4px 0 3px;font-weight:bold">SALDO</div>
<div class="cell r" style="left:703px;top:286px;width:132px;height:16px;line-height:16px;padding:0 4px 0 3px;font-weight:bold;padding-right:6px">122.509.015</div>
<div class="cell r" style="left:835px;top:286px;width:127px;height:16px;line-height:16px;padding:0 4px 0 3px;font-weight:bold;padding-right:6px">117.866.503</div>
<div class="cell c" style="left:1092px;top:270px;width:115px;height:16px;line-height:16px;padding:0 4px 0 3px;">Bunga bank</div>
<div class="cell c" style="left:1207px;top:270px;width:115px;height:16px;line-height:16px;padding:0 4px 0 3px;">Penjualan</div>
<div class="cell" style="left:1331px;top:270px;height:16px;line-height:16px">Ayat Silang</div>
<div class="tri" style="left:703px;top:286px"></div>
<div class="tri" style="left:835px;top:286px"></div>
<div class="af" style="left:72px;top:301px"></div>
<div class="af" style="left:140px;top:301px"></div>
<div class="af" style="left:254px;top:301px"></div>
<div class="af" style="left:324px;top:301px"></div>
<div class="af" style="left:402px;top:301px"></div>
<div class="af" style="left:687px;top:301px"></div>
<div class="af" style="left:819px;top:301px"></div>
<div class="af" style="left:946px;top:301px"></div>
<div class="af" style="left:1076px;top:301px"></div>
<div class="af" style="left:1191px;top:301px"></div>
<div class="af" style="left:1306px;top:301px"></div>
<div class="af" style="left:1393px;top:301px"></div>
<div class="af" style="left:1761px;top:301px"></div>
<div class="cell r" style="left:26px;top:318px;width:27px;height:17px;line-height:17px;padding:0 4px 0 3px;padding-right:3px">0</div>
<div class="cell " style="left:340px;top:318px;width:78px;height:17px;line-height:17px;padding:0 4px 0 3px;">01/09/2025</div>
<div class="cell " style="left:418px;top:318px;width:285px;height:17px;line-height:17px;padding:0 4px 0 3px;">SALDO AWAL</div>
<div class="cell r" style="left:703px;top:318px;width:132px;height:17px;line-height:17px;padding:0 4px 0 3px;padding-right:6px">-</div>
<div class="cell r" style="left:962px;top:318px;width:130px;height:17px;line-height:17px;padding:0 4px 0 3px;padding-right:2px">945.000,00</div>
<div class="cell r" style="left:26px;top:335px;width:27px;height:17px;line-height:17px;padding:0 4px 0 3px;padding-right:3px">1</div>
<div class="cell r" style="left:53px;top:335px;width:35px;height:17px;line-height:17px;padding:0 4px 0 3px;padding-right:2px">9</div>
<div class="cell " style="left:88px;top:335px;width:68px;height:17px;line-height:17px;padding:0 4px 0 3px;">September</div>
<div class="cell " style="left:156px;top:335px;width:114px;height:17px;line-height:17px;padding:0 4px 0 3px;">SDL-BM-0925-001</div>
<div class="cell " style="left:270px;top:335px;width:70px;height:17px;line-height:17px;padding:0 4px 0 3px;">2300</div>
<div class="tri" style="left:270px;top:335px"></div>
<div class="cell " style="left:340px;top:335px;width:78px;height:17px;line-height:17px;padding:0 4px 0 3px;">01/09/2025</div>
<div class="cell " style="left:418px;top:335px;width:285px;height:17px;line-height:17px;padding:0 4px 0 3px;">Pemindahan Saldo Rek Lama</div>
<div class="cell r" style="left:703px;top:335px;width:132px;height:17px;line-height:17px;padding:0 4px 0 3px;padding-right:6px">7.336.015</div>
<div class="cell r" style="left:835px;top:335px;width:127px;height:17px;line-height:17px;padding:0 4px 0 3px;padding-right:6px">-</div>
<div class="cell r" style="left:962px;top:335px;width:130px;height:17px;line-height:17px;padding:0 4px 0 3px;padding-right:2px">8.281.015,00</div>
<div class="cell r" style="left:1207px;top:335px;width:115px;height:17px;line-height:17px;padding:0 4px 0 3px;padding-right:7px">7.336.015,00</div>
<div class="cell r" style="left:26px;top:352px;width:27px;height:17px;line-height:17px;padding:0 4px 0 3px;padding-right:3px">2</div>
<div class="cell r" style="left:53px;top:352px;width:35px;height:17px;line-height:17px;padding:0 4px 0 3px;padding-right:2px">9</div>
<div class="cell " style="left:88px;top:352px;width:68px;height:17px;line-height:17px;padding:0 4px 0 3px;">September</div>
<div class="cell " style="left:156px;top:352px;width:114px;height:17px;line-height:17px;padding:0 4px 0 3px;">SDL-BM-0925-002</div>
<div class="cell " style="left:270px;top:352px;width:70px;height:17px;line-height:17px;padding:0 4px 0 3px;">4000.01</div>
<div class="cell " style="left:340px;top:352px;width:78px;height:17px;line-height:17px;padding:0 4px 0 3px;">01/09/2025</div>
<div class="cell " style="left:418px;top:352px;width:285px;height:17px;line-height:17px;padding:0 4px 0 3px;">Pak Iyas</div>
<div class="cell r" style="left:703px;top:352px;width:132px;height:17px;line-height:17px;padding:0 4px 0 3px;padding-right:6px">250.000</div>
<div class="cell r" style="left:962px;top:352px;width:130px;height:17px;line-height:17px;padding:0 4px 0 3px;padding-right:2px">8.531.015,00</div>
<div class="cell r" style="left:1207px;top:352px;width:115px;height:17px;line-height:17px;padding:0 4px 0 3px;padding-right:7px">250.000,00</div>
<div class="cell" style="left:1385px;top:352px;height:17px;line-height:17px">-</div>
<div class="cell r" style="left:26px;top:369px;width:27px;height:17px;line-height:17px;padding:0 4px 0 3px;padding-right:3px">3</div>
<div class="cell r" style="left:53px;top:369px;width:35px;height:17px;line-height:17px;padding:0 4px 0 3px;padding-right:2px">9</div>
<div class="cell " style="left:88px;top:369px;width:68px;height:17px;line-height:17px;padding:0 4px 0 3px;">September</div>
<div class="cell " style="left:156px;top:369px;width:114px;height:17px;line-height:17px;padding:0 4px 0 3px;">SDL-BM-0925-003</div>
<div class="cell " style="left:270px;top:369px;width:70px;height:17px;line-height:17px;padding:0 4px 0 3px;">4000.01</div>
<div class="cell " style="left:340px;top:369px;width:78px;height:17px;line-height:17px;padding:0 4px 0 3px;">01/09/2025</div>
<div class="cell " style="left:418px;top:369px;width:285px;height:17px;line-height:17px;padding:0 4px 0 3px;">Pak Joe 2812</div>
<div class="cell r" style="left:703px;top:369px;width:132px;height:17px;line-height:17px;padding:0 4px 0 3px;padding-right:6px">400.000</div>
<div class="cell r" style="left:835px;top:369px;width:127px;height:17px;line-height:17px;padding:0 4px 0 3px;padding-right:6px">-</div>
<div class="cell r" style="left:962px;top:369px;width:130px;height:17px;line-height:17px;padding:0 4px 0 3px;padding-right:2px">8.931.015,00</div>
<div class="cell r" style="left:1207px;top:369px;width:115px;height:17px;line-height:17px;padding:0 4px 0 3px;padding-right:7px">400.000,00</div>
<div class="cell" style="left:1385px;top:369px;height:17px;line-height:17px">-</div>
<div class="cell r" style="left:26px;top:386px;width:27px;height:17px;line-height:17px;padding:0 4px 0 3px;padding-right:3px">4</div>
<div class="cell r" style="left:53px;top:386px;width:35px;height:17px;line-height:17px;padding:0 4px 0 3px;padding-right:2px">9</div>
<div class="cell " style="left:88px;top:386px;width:68px;height:17px;line-height:17px;padding:0 4px 0 3px;">September</div>
<div class="cell " style="left:156px;top:386px;width:114px;height:17px;line-height:17px;padding:0 4px 0 3px;">SDL-BM-0925-004</div>
<div class="cell " style="left:270px;top:386px;width:70px;height:17px;line-height:17px;padding:0 4px 0 3px;">4000.01</div>
<div class="cell " style="left:340px;top:386px;width:78px;height:17px;line-height:17px;padding:0 4px 0 3px;">01/09/2025</div>
<div class="cell " style="left:418px;top:386px;width:285px;height:17px;line-height:17px;padding:0 4px 0 3px;">Pak Tata</div>
<div class="cell r" style="left:703px;top:386px;width:132px;height:17px;line-height:17px;padding:0 4px 0 3px;padding-right:6px">5.000.000</div>
<div class="cell r" style="left:835px;top:386px;width:127px;height:17px;line-height:17px;padding:0 4px 0 3px;padding-right:6px">-</div>
<div class="cell r" style="left:962px;top:386px;width:130px;height:17px;line-height:17px;padding:0 4px 0 3px;padding-right:2px">13.931.015,00</div>
<div class="cell r" style="left:1207px;top:386px;width:115px;height:17px;line-height:17px;padding:0 4px 0 3px;padding-right:7px">5.000.000,00</div>
<div class="cell r" style="left:26px;top:403px;width:27px;height:17px;line-height:17px;padding:0 4px 0 3px;padding-right:3px">5</div>
<div class="cell r" style="left:53px;top:403px;width:35px;height:17px;line-height:17px;padding:0 4px 0 3px;padding-right:2px">9</div>
<div class="cell " style="left:88px;top:403px;width:68px;height:17px;line-height:17px;padding:0 4px 0 3px;">September</div>
<div class="cell " style="left:156px;top:403px;width:114px;height:17px;line-height:17px;padding:0 4px 0 3px;">SDL-BK-0925-001</div>
<div class="cell " style="left:270px;top:403px;width:70px;height:17px;line-height:17px;padding:0 4px 0 3px;">ayat silang</div>
<div class="cell " style="left:340px;top:403px;width:78px;height:17px;line-height:17px;padding:0 4px 0 3px;">02/09/2025</div>
<div class="cell " style="left:418px;top:403px;width:285px;height:17px;line-height:17px;padding:0 4px 0 3px;">Tarik Tunai untuk kas</div>
<div class="cell r" style="left:835px;top:403px;width:127px;height:17px;line-height:17px;padding:0 4px 0 3px;padding-right:6px">2.000.000</div>
<div class="cell r" style="left:962px;top:403px;width:130px;height:17px;line-height:17px;padding:0 4px 0 3px;padding-right:2px">11.931.015,00</div>
<div class="cell r" style="left:1207px;top:403px;width:115px;height:17px;line-height:17px;padding:0 4px 0 3px;padding-right:20px">-</div>
<div class="cell r" style="left:26px;top:420px;width:27px;height:17px;line-height:17px;padding:0 4px 0 3px;padding-right:3px">6</div>
<div class="cell r" style="left:53px;top:420px;width:35px;height:17px;line-height:17px;padding:0 4px 0 3px;padding-right:2px">9</div>
<div class="cell " style="left:88px;top:420px;width:68px;height:17px;line-height:17px;padding:0 4px 0 3px;">September</div>
<div class="cell " style="left:156px;top:420px;width:114px;height:17px;line-height:17px;padding:0 4px 0 3px;">SDL-BM-0925-005</div>
<div class="cell " style="left:270px;top:420px;width:70px;height:17px;line-height:17px;padding:0 4px 0 3px;">4000.01</div>
<div class="cell " style="left:340px;top:420px;width:78px;height:17px;line-height:17px;padding:0 4px 0 3px;">02/09/2025</div>
<div class="cell " style="left:418px;top:420px;width:285px;height:17px;line-height:17px;padding:0 4px 0 3px;">Dp Pak Dayat 2816</div>
<div class="cell r" style="left:703px;top:420px;width:132px;height:17px;line-height:17px;padding:0 4px 0 3px;padding-right:6px">2.200.000</div>
<div class="cell r" style="left:835px;top:420px;width:127px;height:17px;line-height:17px;padding:0 4px 0 3px;padding-right:6px">-</div>
<div class="cell r" style="left:962px;top:420px;width:130px;height:17px;line-height:17px;padding:0 4px 0 3px;padding-right:2px">14.131.015,00</div>
<div class="cell r" style="left:1207px;top:420px;width:115px;height:17px;line-height:17px;padding:0 4px 0 3px;padding-right:7px">2.200.000,00</div>
<div class="cell r" style="left:26px;top:437px;width:27px;height:17px;line-height:17px;padding:0 4px 0 3px;padding-right:3px">7</div>
<div class="cell r" style="left:53px;top:437px;width:35px;height:17px;line-height:17px;padding:0 4px 0 3px;padding-right:2px">9</div>
<div class="cell " style="left:88px;top:437px;width:68px;height:17px;line-height:17px;padding:0 4px 0 3px;">September</div>
<div class="cell " style="left:156px;top:437px;width:114px;height:17px;line-height:17px;padding:0 4px 0 3px;">SDL-BK-0925-002</div>
<div class="cell " style="left:270px;top:437px;width:70px;height:17px;line-height:17px;padding:0 4px 0 3px;">5100</div>
<div class="tri" style="left:270px;top:437px"></div>
<div class="cell " style="left:340px;top:437px;width:78px;height:17px;line-height:17px;padding:0 4px 0 3px;">02/09/2025</div>
<div class="cell " style="left:418px;top:437px;width:285px;height:17px;line-height:17px;padding:0 4px 0 3px;">Beli Plat Galvanil 1Mm, 7Lbr</div>
<div class="cell r" style="left:703px;top:437px;width:132px;height:17px;line-height:17px;padding:0 4px 0 3px;padding-right:6px">-</div>
<div class="cell r" style="left:835px;top:437px;width:127px;height:17px;line-height:17px;padding:0 4px 0 3px;padding-right:6px">2.835.000</div>
<div class="cell r" style="left:962px;top:437px;width:130px;height:17px;line-height:17px;padding:0 4px 0 3px;padding-right:2px">11.296.015,00</div>
<div class="cell r" style="left:1207px;top:437px;width:115px;height:17px;line-height:17px;padding:0 4px 0 3px;padding-right:20px">-</div>
<div class="cell r" style="left:26px;top:454px;width:27px;height:17px;line-height:17px;padding:0 4px 0 3px;padding-right:3px">8</div>
<div class="cell r" style="left:53px;top:454px;width:35px;height:17px;line-height:17px;padding:0 4px 0 3px;padding-right:2px">9</div>
<div class="cell " style="left:88px;top:454px;width:68px;height:17px;line-height:17px;padding:0 4px 0 3px;">September</div>
<div class="cell " style="left:156px;top:454px;width:114px;height:17px;line-height:17px;padding:0 4px 0 3px;">SDL-BK-0925-003</div>
<div class="cell " style="left:270px;top:454px;width:70px;height:17px;line-height:17px;padding:0 4px 0 3px;">2200</div>
<div class="tri" style="left:270px;top:454px"></div>
<div class="cell " style="left:340px;top:454px;width:78px;height:17px;line-height:17px;padding:0 4px 0 3px;">02/09/2025</div>
<div class="cell " style="left:418px;top:454px;width:285px;height:17px;line-height:17px;padding:0 4px 0 3px;">Bayar Utang Sdl Ke Djp</div>
<div class="cell r" style="left:703px;top:454px;width:132px;height:17px;line-height:17px;padding:0 4px 0 3px;padding-right:6px">-</div>
<div class="cell r" style="left:835px;top:454px;width:127px;height:17px;line-height:17px;padding:0 4px 0 3px;padding-right:6px">3.775.000</div>
<div class="cell r" style="left:962px;top:454px;width:130px;height:17px;line-height:17px;padding:0 4px 0 3px;padding-right:2px">7.521.015,00</div>
<div class="cell r" style="left:1207px;top:454px;width:115px;height:17px;line-height:17px;padding:0 4px 0 3px;padding-right:20px">-</div>
<div class="cell r" style="left:26px;top:471px;width:27px;height:17px;line-height:17px;padding:0 4px 0 3px;padding-right:3px">9</div>
<div class="cell r" style="left:53px;top:471px;width:35px;height:17px;line-height:17px;padding:0 4px 0 3px;padding-right:2px">9</div>
<div class="cell " style="left:88px;top:471px;width:68px;height:17px;line-height:17px;padding:0 4px 0 3px;">September</div>
<div class="cell " style="left:156px;top:471px;width:114px;height:17px;line-height:17px;padding:0 4px 0 3px;">SDL-BM-0925-006</div>
<div class="cell " style="left:270px;top:471px;width:70px;height:17px;line-height:17px;padding:0 4px 0 3px;">4000.01</div>
<div class="cell " style="left:340px;top:471px;width:78px;height:17px;line-height:17px;padding:0 4px 0 3px;">02/09/2025</div>
<div class="cell " style="left:418px;top:471px;width:285px;height:17px;line-height:17px;padding:0 4px 0 3px;">Pelunasan Pak Dayat 2816</div>
<div class="cell r" style="left:703px;top:471px;width:132px;height:17px;line-height:17px;padding:0 4px 0 3px;padding-right:6px">2.200.000</div>
<div class="cell r" style="left:835px;top:471px;width:127px;height:17px;line-height:17px;padding:0 4px 0 3px;padding-right:6px">-</div>
<div class="cell r" style="left:962px;top:471px;width:130px;height:17px;line-height:17px;padding:0 4px 0 3px;padding-right:2px">9.721.015,00</div>
<div class="cell r" style="left:1207px;top:471px;width:115px;height:17px;line-height:17px;padding:0 4px 0 3px;padding-right:7px">2.200.000,00</div>
<div class="cell r" style="left:26px;top:488px;width:27px;height:17px;line-height:17px;padding:0 4px 0 3px;padding-right:3px">10</div>
<div class="cell r" style="left:53px;top:488px;width:35px;height:17px;line-height:17px;padding:0 4px 0 3px;padding-right:2px">9</div>
<div class="cell " style="left:88px;top:488px;width:68px;height:17px;line-height:17px;padding:0 4px 0 3px;">September</div>
<div class="cell " style="left:156px;top:488px;width:114px;height:17px;line-height:17px;padding:0 4px 0 3px;">SDL-BM-0925-007</div>
<div class="cell " style="left:270px;top:488px;width:70px;height:17px;line-height:17px;padding:0 4px 0 3px;">4000.01</div>
<div class="cell " style="left:340px;top:488px;width:78px;height:17px;line-height:17px;padding:0 4px 0 3px;">03/09/2025</div>
<div class="cell " style="left:418px;top:488px;width:285px;height:17px;line-height:17px;padding:0 4px 0 3px;">Pak Hamdan 2824</div>
<div class="cell r" style="left:703px;top:488px;width:132px;height:17px;line-height:17px;padding:0 4px 0 3px;padding-right:6px">75.000</div>
<div class="cell r" style="left:835px;top:488px;width:127px;height:17px;line-height:17px;padding:0 4px 0 3px;padding-right:6px">-</div>
<div class="cell r" style="left:962px;top:488px;width:130px;height:17px;line-height:17px;padding:0 4px 0 3px;padding-right:2px">9.796.015,00</div>
<div class="cell r" style="left:1207px;top:488px;width:115px;height:17px;line-height:17px;padding:0 4px 0 3px;padding-right:7px">75.000,00</div>
<div class="cell r" style="left:26px;top:505px;width:27px;height:17px;line-height:17px;padding:0 4px 0 3px;padding-right:3px">11</div>
<div class="cell r" style="left:53px;top:505px;width:35px;height:17px;line-height:17px;padding:0 4px 0 3px;padding-right:2px">9</div>
<div class="cell " style="left:88px;top:505px;width:68px;height:17px;line-height:17px;padding:0 4px 0 3px;">September</div>
<div class="cell " style="left:156px;top:505px;width:114px;height:17px;line-height:17px;padding:0 4px 0 3px;">SDL-BK-0925-004</div>
<div class="cell " style="left:270px;top:505px;width:70px;height:17px;line-height:17px;padding:0 4px 0 3px;">ayat silang</div>
<div class="cell " style="left:340px;top:505px;width:78px;height:17px;line-height:17px;padding:0 4px 0 3px;">04/09/2025</div>
<div class="cell " style="left:418px;top:505px;width:285px;height:17px;line-height:17px;padding:0 4px 0 3px;">Tarik Tunai untuk kas</div>
<div class="cell r" style="left:835px;top:505px;width:127px;height:17px;line-height:17px;padding:0 4px 0 3px;padding-right:6px">3.000.000</div>
<div class="cell r" style="left:962px;top:505px;width:130px;height:17px;line-height:17px;padding:0 4px 0 3px;padding-right:2px">6.796.015,00</div>
<div class="cell r" style="left:1207px;top:505px;width:115px;height:17px;line-height:17px;padding:0 4px 0 3px;padding-right:20px">-</div>
<div class="cell r" style="left:26px;top:522px;width:27px;height:17px;line-height:17px;padding:0 4px 0 3px;padding-right:3px">12</div>
<div class="cell r" style="left:53px;top:522px;width:35px;height:17px;line-height:17px;padding:0 4px 0 3px;padding-right:2px">9</div>
<div class="cell " style="left:88px;top:522px;width:68px;height:17px;line-height:17px;padding:0 4px 0 3px;">September</div>
<div class="cell " style="left:156px;top:522px;width:114px;height:17px;line-height:17px;padding:0 4px 0 3px;">SDL-BK-0925-005</div>
<div class="cell " style="left:270px;top:522px;width:70px;height:17px;line-height:17px;padding:0 4px 0 3px;">6201.01</div>
<div class="cell " style="left:340px;top:522px;width:78px;height:17px;line-height:17px;padding:0 4px 0 3px;">06/09/2025</div>
<div class="cell " style="left:418px;top:522px;width:285px;height:17px;line-height:17px;padding:0 4px 0 3px;">Kasbon Mingguan Riski</div>
<div class="cell r" style="left:703px;top:522px;width:132px;height:17px;line-height:17px;padding:0 4px 0 3px;padding-right:6px">-</div>
<div class="cell r" style="left:835px;top:522px;width:127px;height:17px;line-height:17px;padding:0 4px 0 3px;padding-right:6px">2.200.000</div>
<div class="cell r" style="left:962px;top:522px;width:130px;height:17px;line-height:17px;padding:0 4px 0 3px;padding-right:2px">4.596.015,00</div>
<div class="cell r" style="left:1207px;top:522px;width:115px;height:17px;line-height:17px;padding:0 4px 0 3px;padding-right:20px">-</div>
<div class="cell r" style="left:26px;top:539px;width:27px;height:17px;line-height:17px;padding:0 4px 0 3px;padding-right:3px">13</div>
<div class="cell r" style="left:53px;top:539px;width:35px;height:17px;line-height:17px;padding:0 4px 0 3px;padding-right:2px">9</div>
<div class="cell " style="left:88px;top:539px;width:68px;height:17px;line-height:17px;padding:0 4px 0 3px;">September</div>
<div class="cell " style="left:156px;top:539px;width:114px;height:17px;line-height:17px;padding:0 4px 0 3px;">SDL-BK-0925-006</div>
<div class="cell " style="left:270px;top:539px;width:70px;height:17px;line-height:17px;padding:0 4px 0 3px;">6201.01</div>
<div class="cell " style="left:340px;top:539px;width:78px;height:17px;line-height:17px;padding:0 4px 0 3px;">06/09/2025</div>
<div class="cell " style="left:418px;top:539px;width:285px;height:17px;line-height:17px;padding:0 4px 0 3px;">Kasbon Mingguan Subro</div>
<div class="cell r" style="left:703px;top:539px;width:132px;height:17px;line-height:17px;padding:0 4px 0 3px;padding-right:6px">-</div>
<div class="cell r" style="left:835px;top:539px;width:127px;height:17px;line-height:17px;padding:0 4px 0 3px;padding-right:6px">600.000</div>
<div class="cell r" style="left:962px;top:539px;width:130px;height:17px;line-height:17px;padding:0 4px 0 3px;padding-right:2px">3.996.015,00</div>
<div class="cell r" style="left:1207px;top:539px;width:115px;height:17px;line-height:17px;padding:0 4px 0 3px;padding-right:20px">-</div>
<div class="cell r" style="left:26px;top:556px;width:27px;height:17px;line-height:17px;padding:0 4px 0 3px;padding-right:3px">14</div>
<div class="cell r" style="left:53px;top:556px;width:35px;height:17px;line-height:17px;padding:0 4px 0 3px;padding-right:2px">9</div>
<div class="cell " style="left:88px;top:556px;width:68px;height:17px;line-height:17px;padding:0 4px 0 3px;">September</div>
<div class="cell " style="left:156px;top:556px;width:114px;height:17px;line-height:17px;padding:0 4px 0 3px;">SDL-BK-0925-007</div>
<div class="cell " style="left:270px;top:556px;width:70px;height:17px;line-height:17px;padding:0 4px 0 3px;">6201.01</div>
<div class="cell " style="left:340px;top:556px;width:78px;height:17px;line-height:17px;padding:0 4px 0 3px;">06/09/2025</div>
<div class="cell " style="left:418px;top:556px;width:285px;height:17px;line-height:17px;padding:0 4px 0 3px;">Kasbon Mingguan Anggi</div>
<div class="cell r" style="left:703px;top:556px;width:132px;height:17px;line-height:17px;padding:0 4px 0 3px;padding-right:6px">-</div>
<div class="cell r" style="left:835px;top:556px;width:127px;height:17px;line-height:17px;padding:0 4px 0 3px;padding-right:6px">1.500.000</div>
<div class="cell r" style="left:962px;top:556px;width:130px;height:17px;line-height:17px;padding:0 4px 0 3px;padding-right:2px">2.496.015,00</div>
<div class="cell r" style="left:1207px;top:556px;width:115px;height:17px;line-height:17px;padding:0 4px 0 3px;padding-right:20px">-</div>
<div class="cell r" style="left:26px;top:573px;width:27px;height:17px;line-height:17px;padding:0 4px 0 3px;padding-right:3px">15</div>
<div class="cell r" style="left:53px;top:573px;width:35px;height:17px;line-height:17px;padding:0 4px 0 3px;padding-right:2px">9</div>
<div class="cell " style="left:88px;top:573px;width:68px;height:17px;line-height:17px;padding:0 4px 0 3px;">September</div>
<div class="cell " style="left:156px;top:573px;width:114px;height:17px;line-height:17px;padding:0 4px 0 3px;">SDL-BK-0925-008</div>
<div class="cell " style="left:270px;top:573px;width:70px;height:17px;line-height:17px;padding:0 4px 0 3px;">7200.02</div>
<div class="cell " style="left:340px;top:573px;width:78px;height:17px;line-height:17px;padding:0 4px 0 3px;">06/09/2025</div>
<div class="cell " style="left:418px;top:573px;width:285px;height:17px;line-height:17px;padding:0 4px 0 3px;">Biaya Admin</div>
<div class="cell r" style="left:703px;top:573px;width:132px;height:17px;line-height:17px;padding:0 4px 0 3px;padding-right:6px">-</div>
<div class="cell r" style="left:835px;top:573px;width:127px;height:17px;line-height:17px;padding:0 4px 0 3px;padding-right:6px">2.500</div>
<div class="cell r" style="left:962px;top:573px;width:130px;height:17px;line-height:17px;padding:0 4px 0 3px;padding-right:2px">2.493.515,00</div>
<div class="cell r" style="left:1207px;top:573px;width:115px;height:17px;line-height:17px;padding:0 4px 0 3px;padding-right:20px">-</div>
<div class="cell r" style="left:26px;top:590px;width:27px;height:17px;line-height:17px;padding:0 4px 0 3px;padding-right:3px">16</div>
<div class="cell r" style="left:53px;top:590px;width:35px;height:17px;line-height:17px;padding:0 4px 0 3px;padding-right:2px">9</div>
<div class="cell " style="left:88px;top:590px;width:68px;height:17px;line-height:17px;padding:0 4px 0 3px;">September</div>
<div class="cell " style="left:156px;top:590px;width:114px;height:17px;line-height:17px;padding:0 4px 0 3px;">SDL-BM-0925-008</div>
<div class="cell " style="left:270px;top:590px;width:70px;height:17px;line-height:17px;padding:0 4px 0 3px;">4000.01</div>
<div class="cell " style="left:340px;top:590px;width:78px;height:17px;line-height:17px;padding:0 4px 0 3px;">08/09/2025</div>
<div class="cell " style="left:418px;top:590px;width:285px;height:17px;line-height:17px;padding:0 4px 0 3px;">Pak Juna 2830</div>
<div class="cell r" style="left:703px;top:590px;width:132px;height:17px;line-height:17px;padding:0 4px 0 3px;padding-right:6px">460.000</div>
<div class="cell r" style="left:835px;top:590px;width:127px;height:17px;line-height:17px;padding:0 4px 0 3px;padding-right:6px">-</div>
<div class="cell r" style="left:962px;top:590px;width:130px;height:17px;line-height:17px;padding:0 4px 0 3px;padding-right:2px">2.953.515,00</div>
<div class="cell r" style="left:1207px;top:590px;width:115px;height:17px;line-height:17px;padding:0 4px 0 3px;padding-right:7px">460.000,00</div>
<div class="cell r" style="left:26px;top:607px;width:27px;height:17px;line-height:17px;padding:0 4px 0 3px;padding-right:3px">17</div>
<div class="cell r" style="left:53px;top:607px;width:35px;height:17px;line-height:17px;padding:0 4px 0 3px;padding-right:2px">9</div>
<div class="cell " style="left:88px;top:607px;width:68px;height:17px;line-height:17px;padding:0 4px 0 3px;">September</div>
<div class="cell " style="left:156px;top:607px;width:114px;height:17px;line-height:17px;padding:0 4px 0 3px;">SDL-BK-0925-009</div>
<div class="cell " style="left:270px;top:607px;width:70px;height:17px;line-height:17px;padding:0 4px 0 3px;">6203.04</div>
<div class="cell " style="left:340px;top:607px;width:78px;height:17px;line-height:17px;padding:0 4px 0 3px;">08/09/2025</div>
<div class="cell " style="left:418px;top:607px;width:285px;height:17px;line-height:17px;padding:0 4px 0 3px;">Bayar Pembuatan Cv</div>
<div class="cell r" style="left:703px;top:607px;width:132px;height:17px;line-height:17px;padding:0 4px 0 3px;padding-right:6px">-</div>
<div class="cell r" style="left:835px;top:607px;width:127px;height:17px;line-height:17px;padding:0 4px 0 3px;padding-right:6px">2.500.000</div>
<div class="cell r" style="left:962px;top:607px;width:130px;height:17px;line-height:17px;padding:0 4px 0 3px;padding-right:2px">453.515,00</div>
<div class="cell r" style="left:1207px;top:607px;width:115px;height:17px;line-height:17px;padding:0 4px 0 3px;padding-right:20px">-</div>
<div class="cell r" style="left:26px;top:624px;width:27px;height:17px;line-height:17px;padding:0 4px 0 3px;padding-right:3px">18</div>
<div class="cell r" style="left:53px;top:624px;width:35px;height:17px;line-height:17px;padding:0 4px 0 3px;padding-right:2px">9</div>
<div class="cell " style="left:88px;top:624px;width:68px;height:17px;line-height:17px;padding:0 4px 0 3px;">September</div>
<div class="cell " style="left:156px;top:624px;width:114px;height:17px;line-height:17px;padding:0 4px 0 3px;">SDL-BM-0925-009</div>
<div class="cell " style="left:270px;top:624px;width:70px;height:17px;line-height:17px;padding:0 4px 0 3px;">4000.01</div>
<div class="cell " style="left:340px;top:624px;width:78px;height:17px;line-height:17px;padding:0 4px 0 3px;">08/09/2025</div>
<div class="cell " style="left:418px;top:624px;width:285px;height:17px;line-height:17px;padding:0 4px 0 3px;">Cicilan Laser Sentosa Abadi</div>
<div class="cell r" style="left:703px;top:624px;width:132px;height:17px;line-height:17px;padding:0 4px 0 3px;padding-right:6px">4.695.000</div>
<div class="cell r" style="left:835px;top:624px;width:127px;height:17px;line-height:17px;padding:0 4px 0 3px;padding-right:6px">-</div>
<div class="cell r" style="left:962px;top:624px;width:130px;height:17px;line-height:17px;padding:0 4px 0 3px;padding-right:2px">5.148.515,00</div>
<div class="cell r" style="left:1207px;top:624px;width:115px;height:17px;line-height:17px;padding:0 4px 0 3px;padding-right:7px">4.695.000,00</div>
<div class="cell r" style="left:26px;top:641px;width:27px;height:17px;line-height:17px;padding:0 4px 0 3px;padding-right:3px">19</div>
<div class="cell r" style="left:53px;top:641px;width:35px;height:17px;line-height:17px;padding:0 4px 0 3px;padding-right:2px">9</div>
<div class="cell " style="left:88px;top:641px;width:68px;height:17px;line-height:17px;padding:0 4px 0 3px;">September</div>
<div class="cell " style="left:156px;top:641px;width:114px;height:17px;line-height:17px;padding:0 4px 0 3px;">SDL-BM-0925-010</div>
<div class="cell " style="left:270px;top:641px;width:70px;height:17px;line-height:17px;padding:0 4px 0 3px;">4000.01</div>
<div class="cell " style="left:340px;top:641px;width:78px;height:17px;line-height:17px;padding:0 4px 0 3px;">08/09/2025</div>
<div class="cell " style="left:418px;top:641px;width:285px;height:17px;line-height:17px;padding:0 4px 0 3px;">Pak Yos 2833</div>
<div class="cell r" style="left:703px;top:641px;width:132px;height:17px;line-height:17px;padding:0 4px 0 3px;padding-right:6px">150.000</div>
<div class="cell r" style="left:835px;top:641px;width:127px;height:17px;line-height:17px;padding:0 4px 0 3px;padding-right:6px">-</div>
<div class="cell r" style="left:962px;top:641px;width:130px;height:17px;line-height:17px;padding:0 4px 0 3px;padding-right:2px">5.298.515,00</div>
<div class="cell r" style="left:1207px;top:641px;width:115px;height:17px;line-height:17px;padding:0 4px 0 3px;padding-right:7px">150.000,00</div>
<div class="cell r" style="left:26px;top:658px;width:27px;height:17px;line-height:17px;padding:0 4px 0 3px;padding-right:3px">20</div>
<div class="cell r" style="left:53px;top:658px;width:35px;height:17px;line-height:17px;padding:0 4px 0 3px;padding-right:2px">9</div>
<div class="cell " style="left:88px;top:658px;width:68px;height:17px;line-height:17px;padding:0 4px 0 3px;">September</div>
<div class="cell " style="left:156px;top:658px;width:114px;height:17px;line-height:17px;padding:0 4px 0 3px;">SDL-BK-0925-010</div>
<div class="cell " style="left:270px;top:658px;width:70px;height:17px;line-height:17px;padding:0 4px 0 3px;">5100</div>
<div class="tri" style="left:270px;top:658px"></div>
<div class="cell " style="left:340px;top:658px;width:78px;height:17px;line-height:17px;padding:0 4px 0 3px;">09/09/2025</div>
<div class="cell " style="left:418px;top:658px;width:285px;height:17px;line-height:17px;padding:0 4px 0 3px;">Beli Plat Ss Hl 0.8Mm, 1Lbr</div>
<div class="cell r" style="left:703px;top:658px;width:132px;height:17px;line-height:17px;padding:0 4px 0 3px;padding-right:6px">-</div>
<div class="cell r" style="left:835px;top:658px;width:127px;height:17px;line-height:17px;padding:0 4px 0 3px;padding-right:6px">835.000</div>
<div class="cell r" style="left:962px;top:658px;width:130px;height:17px;line-height:17px;padding:0 4px 0 3px;padding-right:2px">4.463.515,00</div>
<div class="cell r" style="left:1207px;top:658px;width:115px;height:17px;line-height:17px;padding:0 4px 0 3px;padding-right:20px">-</div>
<div class="cell r" style="left:26px;top:675px;width:27px;height:17px;line-height:17px;padding:0 4px 0 3px;padding-right:3px">21</div>
<div class="cell r" style="left:53px;top:675px;width:35px;height:17px;line-height:17px;padding:0 4px 0 3px;padding-right:2px">9</div>
<div class="cell " style="left:88px;top:675px;width:68px;height:17px;line-height:17px;padding:0 4px 0 3px;">September</div>
<div class="cell " style="left:156px;top:675px;width:114px;height:17px;line-height:17px;padding:0 4px 0 3px;">SDL-BM-0925-011</div>
<div class="cell " style="left:270px;top:675px;width:70px;height:17px;line-height:17px;padding:0 4px 0 3px;">4000.01</div>
<div class="cell " style="left:340px;top:675px;width:78px;height:17px;line-height:17px;padding:0 4px 0 3px;">09/09/2025</div>
<div class="cell " style="left:418px;top:675px;width:285px;height:17px;line-height:17px;padding:0 4px 0 3px;">Pak Yudo 2837</div>
<div class="cell r" style="left:703px;top:675px;width:132px;height:17px;line-height:17px;padding:0 4px 0 3px;padding-right:6px">1.500.000</div>
<div class="cell r" style="left:835px;top:675px;width:127px;height:17px;line-height:17px;padding:0 4px 0 3px;padding-right:6px">-</div>
<div class="cell r" style="left:962px;top:675px;width:130px;height:17px;line-height:17px;padding:0 4px 0 3px;padding-right:2px">5.963.515,00</div>
<div class="cell r" style="left:1207px;top:675px;width:115px;height:17px;line-height:17px;padding:0 4px 0 3px;padding-right:7px">1.500.000,00</div>
<div class="cell r" style="left:26px;top:692px;width:27px;height:17px;line-height:17px;padding:0 4px 0 3px;padding-right:3px">22</div>
<div class="cell r" style="left:53px;top:692px;width:35px;height:17px;line-height:17px;padding:0 4px 0 3px;padding-right:2px">9</div>
<div class="cell " style="left:88px;top:692px;width:68px;height:17px;line-height:17px;padding:0 4px 0 3px;">September</div>
<div class="cell " style="left:156px;top:692px;width:114px;height:17px;line-height:17px;padding:0 4px 0 3px;">SDL-BM-0925-012</div>
<div class="cell " style="left:270px;top:692px;width:70px;height:17px;line-height:17px;padding:0 4px 0 3px;">4000.01</div>
<div class="cell " style="left:340px;top:692px;width:78px;height:17px;line-height:17px;padding:0 4px 0 3px;">10/09/2025</div>
<div class="cell " style="left:418px;top:692px;width:285px;height:17px;line-height:17px;padding:0 4px 0 3px;">Pak Rizal 2846</div>
<div class="cell r" style="left:703px;top:692px;width:132px;height:17px;line-height:17px;padding:0 4px 0 3px;padding-right:6px">200.000</div>
<div class="cell r" style="left:835px;top:692px;width:127px;height:17px;line-height:17px;padding:0 4px 0 3px;padding-right:6px">-</div>
<div class="cell r" style="left:962px;top:692px;width:130px;height:17px;line-height:17px;padding:0 4px 0 3px;padding-right:2px">6.163.515,00</div>
<div class="cell r" style="left:1207px;top:692px;width:115px;height:17px;line-height:17px;padding:0 4px 0 3px;padding-right:7px">200.000,00</div>
<div class="cell r" style="left:26px;top:709px;width:27px;height:17px;line-height:17px;padding:0 4px 0 3px;padding-right:3px">23</div>
<div class="cell r" style="left:53px;top:709px;width:35px;height:17px;line-height:17px;padding:0 4px 0 3px;padding-right:2px">9</div>
<div class="cell " style="left:88px;top:709px;width:68px;height:17px;line-height:17px;padding:0 4px 0 3px;">September</div>
<div class="cell " style="left:156px;top:709px;width:114px;height:17px;line-height:17px;padding:0 4px 0 3px;">SDL-BK-0925-011</div>
<div class="cell " style="left:270px;top:709px;width:70px;height:17px;line-height:17px;padding:0 4px 0 3px;">5100</div>
<div class="tri" style="left:270px;top:709px"></div>
<div class="cell " style="left:340px;top:709px;width:78px;height:17px;line-height:17px;padding:0 4px 0 3px;">11/09/2025</div>
<div class="cell " style="left:418px;top:709px;width:285px;height:17px;line-height:17px;padding:0 4px 0 3px;">Beli Plat Besi 2Mm,1Lbr</div>
<div class="cell r" style="left:703px;top:709px;width:132px;height:17px;line-height:17px;padding:0 4px 0 3px;padding-right:6px">-</div>
<div class="cell r" style="left:835px;top:709px;width:127px;height:17px;line-height:17px;padding:0 4px 0 3px;padding-right:6px">535.000</div>
<div class="cell r" style="left:962px;top:709px;width:130px;height:17px;line-height:17px;padding:0 4px 0 3px;padding-right:2px">5.628.515,00</div>
<div class="cell r" style="left:1207px;top:709px;width:115px;height:17px;line-height:17px;padding:0 4px 0 3px;padding-right:20px">-</div>
<div class="cell r" style="left:26px;top:726px;width:27px;height:17px;line-height:17px;padding:0 4px 0 3px;padding-right:3px">24</div>
<div class="cell r" style="left:53px;top:726px;width:35px;height:17px;line-height:17px;padding:0 4px 0 3px;padding-right:2px">9</div>
<div class="cell " style="left:88px;top:726px;width:68px;height:17px;line-height:17px;padding:0 4px 0 3px;">September</div>
<div class="cell " style="left:156px;top:726px;width:114px;height:17px;line-height:17px;padding:0 4px 0 3px;">SDL-BK-0925-012</div>
<div class="cell " style="left:270px;top:726px;width:70px;height:17px;line-height:17px;padding:0 4px 0 3px;">5100</div>
<div class="tri" style="left:270px;top:726px"></div>
<div class="cell " style="left:340px;top:726px;width:78px;height:17px;line-height:17px;padding:0 4px 0 3px;">11/09/2025</div>
<div class="cell " style="left:418px;top:726px;width:285px;height:17px;line-height:17px;padding:0 4px 0 3px;">Bayar Mdf Ke Grapica</div>
<div class="cell r" style="left:703px;top:726px;width:132px;height:17px;line-height:17px;padding:0 4px 0 3px;padding-right:6px">-</div>
<div class="cell r" style="left:835px;top:726px;width:127px;height:17px;line-height:17px;padding:0 4px 0 3px;padding-right:6px">570.000</div>
<div class="cell r" style="left:962px;top:726px;width:130px;height:17px;line-height:17px;padding:0 4px 0 3px;padding-right:2px">5.058.515,00</div>
<div class="cell r" style="left:1207px;top:726px;width:115px;height:17px;line-height:17px;padding:0 4px 0 3px;padding-right:20px">-</div>
<div class="cell r" style="left:26px;top:743px;width:27px;height:17px;line-height:17px;padding:0 4px 0 3px;padding-right:3px">25</div>
<div class="cell r" style="left:53px;top:743px;width:35px;height:17px;line-height:17px;padding:0 4px 0 3px;padding-right:2px">9</div>
<div class="cell " style="left:88px;top:743px;width:68px;height:17px;line-height:17px;padding:0 4px 0 3px;">September</div>
<div class="cell " style="left:156px;top:743px;width:114px;height:17px;line-height:17px;padding:0 4px 0 3px;">SDL-BM-0925-013</div>
<div class="cell " style="left:270px;top:743px;width:70px;height:17px;line-height:17px;padding:0 4px 0 3px;">4000.01</div>
<div class="cell " style="left:340px;top:743px;width:78px;height:17px;line-height:17px;padding:0 4px 0 3px;">11/09/2025</div>
<div class="cell " style="left:418px;top:743px;width:285px;height:17px;line-height:17px;padding:0 4px 0 3px;">Pak Andri Irawan 2851</div>
<div class="cell r" style="left:703px;top:743px;width:132px;height:17px;line-height:17px;padding:0 4px 0 3px;padding-right:6px">1.100.000</div>
<div class="cell r" style="left:835px;top:743px;width:127px;height:17px;line-height:17px;padding:0 4px 0 3px;padding-right:6px">-</div>
<div class="cell r" style="left:962px;top:743px;width:130px;height:17px;line-height:17px;padding:0 4px 0 3px;padding-right:2px">6.158.515,00</div>
<div class="cell r" style="left:1207px;top:743px;width:115px;height:17px;line-height:17px;padding:0 4px 0 3px;padding-right:7px">1.100.000,00</div>
<div class="cell r" style="left:26px;top:760px;width:27px;height:17px;line-height:17px;padding:0 4px 0 3px;padding-right:3px">26</div>
<div class="cell r" style="left:53px;top:760px;width:35px;height:17px;line-height:17px;padding:0 4px 0 3px;padding-right:2px">9</div>
<div class="cell " style="left:88px;top:760px;width:68px;height:17px;line-height:17px;padding:0 4px 0 3px;">September</div>
<div class="cell " style="left:156px;top:760px;width:114px;height:17px;line-height:17px;padding:0 4px 0 3px;">SDL-BM-0925-014</div>
<div class="cell " style="left:270px;top:760px;width:70px;height:17px;line-height:17px;padding:0 4px 0 3px;">4000.01</div>
<div class="cell " style="left:340px;top:760px;width:78px;height:17px;line-height:17px;padding:0 4px 0 3px;">12/09/2025</div>
<div class="cell " style="left:418px;top:760px;width:285px;height:17px;line-height:17px;padding:0 4px 0 3px;">Pak Rizal 2846</div>
<div class="cell r" style="left:703px;top:760px;width:132px;height:17px;line-height:17px;padding:0 4px 0 3px;padding-right:6px">10.000</div>
<div class="cell r" style="left:835px;top:760px;width:127px;height:17px;line-height:17px;padding:0 4px 0 3px;padding-right:6px">-</div>
<div class="cell r" style="left:962px;top:760px;width:130px;height:17px;line-height:17px;padding:0 4px 0 3px;padding-right:2px">6.168.515,00</div>
<div class="cell r" style="left:1207px;top:760px;width:115px;height:17px;line-height:17px;padding:0 4px 0 3px;padding-right:7px">10.000,00</div>
<div class="cell r" style="left:26px;top:777px;width:27px;height:17px;line-height:17px;padding:0 4px 0 3px;padding-right:3px">27</div>
<div class="cell r" style="left:53px;top:777px;width:35px;height:17px;line-height:17px;padding:0 4px 0 3px;padding-right:2px">9</div>
<div class="cell " style="left:88px;top:777px;width:68px;height:17px;line-height:17px;padding:0 4px 0 3px;">September</div>
<div class="cell " style="left:156px;top:777px;width:114px;height:17px;line-height:17px;padding:0 4px 0 3px;">SDL-BK-0925-013</div>
<div class="cell " style="left:270px;top:777px;width:70px;height:17px;line-height:17px;padding:0 4px 0 3px;">5100</div>
<div class="tri" style="left:270px;top:777px"></div>
<div class="cell " style="left:340px;top:777px;width:78px;height:17px;line-height:17px;padding:0 4px 0 3px;">16/09/2025</div>
<div class="cell " style="left:418px;top:777px;width:285px;height:17px;line-height:17px;padding:0 4px 0 3px;">Beli Plat Galvanil 1,5Mm, 1Lbr</div>
<div class="cell r" style="left:703px;top:777px;width:132px;height:17px;line-height:17px;padding:0 4px 0 3px;padding-right:6px">-</div>
<div class="cell r" style="left:835px;top:777px;width:127px;height:17px;line-height:17px;padding:0 4px 0 3px;padding-right:6px">1.038.000</div>
<div class="cell r" style="left:962px;top:777px;width:130px;height:17px;line-height:17px;padding:0 4px 0 3px;padding-right:2px">5.130.515,00</div>
<div class="cell r" style="left:1207px;top:777px;width:115px;height:17px;line-height:17px;padding:0 4px 0 3px;padding-right:20px">-</div>
<div class="cell r" style="left:26px;top:794px;width:27px;height:17px;line-height:17px;padding:0 4px 0 3px;padding-right:3px">28</div>
<div class="cell r" style="left:53px;top:794px;width:35px;height:17px;line-height:17px;padding:0 4px 0 3px;padding-right:2px">9</div>
<div class="cell " style="left:88px;top:794px;width:68px;height:17px;line-height:17px;padding:0 4px 0 3px;">September</div>
<div class="cell " style="left:156px;top:794px;width:114px;height:17px;line-height:17px;padding:0 4px 0 3px;">SDL-BM-0925-015</div>
<div class="cell " style="left:270px;top:794px;width:70px;height:17px;line-height:17px;padding:0 4px 0 3px;">4000.01</div>
<div class="cell " style="left:340px;top:794px;width:78px;height:17px;line-height:17px;padding:0 4px 0 3px;">19/09/2025</div>
<div class="cell " style="left:418px;top:794px;width:285px;height:17px;line-height:17px;padding:0 4px 0 3px;">Pak Isman 2867</div>
<div class="cell r" style="left:703px;top:794px;width:132px;height:17px;line-height:17px;padding:0 4px 0 3px;padding-right:6px">1.450.000</div>
<div class="cell r" style="left:835px;top:794px;width:127px;height:17px;line-height:17px;padding:0 4px 0 3px;padding-right:6px">-</div>
<div class="cell r" style="left:962px;top:794px;width:130px;height:17px;line-height:17px;padding:0 4px 0 3px;padding-right:2px">6.580.515,00</div>
<div class="cell r" style="left:1207px;top:794px;width:115px;height:17px;line-height:17px;padding:0 4px 0 3px;padding-right:7px">1.450.000,00</div>
<div class="cell r" style="left:26px;top:811px;width:27px;height:17px;line-height:17px;padding:0 4px 0 3px;padding-right:3px">29</div>
<div class="cell r" style="left:53px;top:811px;width:35px;height:17px;line-height:17px;padding:0 4px 0 3px;padding-right:2px">9</div>
<div class="cell " style="left:88px;top:811px;width:68px;height:17px;line-height:17px;padding:0 4px 0 3px;">September</div>
<div class="cell " style="left:156px;top:811px;width:114px;height:17px;line-height:17px;padding:0 4px 0 3px;">SDL-BM-0925-016</div>
<div class="cell " style="left:270px;top:811px;width:70px;height:17px;line-height:17px;padding:0 4px 0 3px;">4000.01</div>
<div class="cell " style="left:340px;top:811px;width:78px;height:17px;line-height:17px;padding:0 4px 0 3px;">19/09/2025</div>
<div class="cell " style="left:418px;top:811px;width:285px;height:17px;line-height:17px;padding:0 4px 0 3px;">Sentosa Abadi Bln Agustus 25</div>
<div class="cell r" style="left:703px;top:811px;width:132px;height:17px;line-height:17px;padding:0 4px 0 3px;padding-right:6px">1.050.000</div>
<div class="cell r" style="left:835px;top:811px;width:127px;height:17px;line-height:17px;padding:0 4px 0 3px;padding-right:6px">-</div>
<div class="cell r" style="left:962px;top:811px;width:130px;height:17px;line-height:17px;padding:0 4px 0 3px;padding-right:2px">7.630.515,00</div>
<div class="cell r" style="left:1207px;top:811px;width:115px;height:17px;line-height:17px;padding:0 4px 0 3px;padding-right:7px">1.050.000,00</div>
<div class="cell r" style="left:26px;top:828px;width:27px;height:17px;line-height:17px;padding:0 4px 0 3px;padding-right:3px">30</div>
<div class="cell r" style="left:53px;top:828px;width:35px;height:17px;line-height:17px;padding:0 4px 0 3px;padding-right:2px">9</div>
<div class="cell " style="left:88px;top:828px;width:68px;height:17px;line-height:17px;padding:0 4px 0 3px;">September</div>
<div class="cell " style="left:156px;top:828px;width:114px;height:17px;line-height:17px;padding:0 4px 0 3px;">SDL-BK-0925-014</div>
<div class="cell " style="left:270px;top:828px;width:70px;height:17px;line-height:17px;padding:0 4px 0 3px;">5100</div>
<div class="tri" style="left:270px;top:828px"></div>
<div class="cell " style="left:340px;top:828px;width:78px;height:17px;line-height:17px;padding:0 4px 0 3px;">22/09/2025</div>
<div class="cell " style="left:418px;top:828px;width:285px;height:17px;line-height:17px;padding:0 4px 0 3px;">Beli Plat Besi 2Mm,1Lbr</div>
<div class="cell r" style="left:703px;top:828px;width:132px;height:17px;line-height:17px;padding:0 4px 0 3px;padding-right:6px">-</div>
<div class="cell r" style="left:835px;top:828px;width:127px;height:17px;line-height:17px;padding:0 4px 0 3px;padding-right:6px">535.000</div>
<div class="cell r" style="left:962px;top:828px;width:130px;height:17px;line-height:17px;padding:0 4px 0 3px;padding-right:2px">7.095.515,00</div>
<div class="cell r" style="left:1207px;top:828px;width:115px;height:17px;line-height:17px;padding:0 4px 0 3px;padding-right:20px">-</div>
<div class="cell r" style="left:26px;top:845px;width:27px;height:17px;line-height:17px;padding:0 4px 0 3px;padding-right:3px">31</div>
<div class="cell r" style="left:53px;top:845px;width:35px;height:17px;line-height:17px;padding:0 4px 0 3px;padding-right:2px">9</div>
<div class="cell " style="left:88px;top:845px;width:68px;height:17px;line-height:17px;padding:0 4px 0 3px;">September</div>
<div class="cell " style="left:156px;top:845px;width:114px;height:17px;line-height:17px;padding:0 4px 0 3px;">SDL-BK-0925-015</div>
<div class="cell " style="left:270px;top:845px;width:70px;height:17px;line-height:17px;padding:0 4px 0 3px;">ayat silang</div>
<div class="cell " style="left:340px;top:845px;width:78px;height:17px;line-height:17px;padding:0 4px 0 3px;">22/09/2025</div>
<div class="cell " style="left:418px;top:845px;width:285px;height:17px;line-height:17px;padding:0 4px 0 3px;">Tarik Tunai untuk kas</div>
<div class="cell r" style="left:835px;top:845px;width:127px;height:17px;line-height:17px;padding:0 4px 0 3px;padding-right:6px">2.000.000</div>
<div class="cell r" style="left:962px;top:845px;width:130px;height:17px;line-height:17px;padding:0 4px 0 3px;padding-right:2px">5.095.515,00</div>
<div class="cell r" style="left:1207px;top:845px;width:115px;height:17px;line-height:17px;padding:0 4px 0 3px;padding-right:20px">-</div>
<div class="cell r" style="left:26px;top:862px;width:27px;height:17px;line-height:17px;padding:0 4px 0 3px;padding-right:3px">32</div>
<div class="cell r" style="left:53px;top:862px;width:35px;height:17px;line-height:17px;padding:0 4px 0 3px;padding-right:2px">9</div>
<div class="cell " style="left:88px;top:862px;width:68px;height:17px;line-height:17px;padding:0 4px 0 3px;">September</div>
<div class="cell " style="left:156px;top:862px;width:114px;height:17px;line-height:17px;padding:0 4px 0 3px;">SDL-BM-0925-017</div>
<div class="cell " style="left:270px;top:862px;width:70px;height:17px;line-height:17px;padding:0 4px 0 3px;">4000.01</div>
<div class="cell " style="left:340px;top:862px;width:78px;height:17px;line-height:17px;padding:0 4px 0 3px;">24/09/2025</div>
<div class="cell " style="left:418px;top:862px;width:285px;height:17px;line-height:17px;padding:0 4px 0 3px;">Pak Madi 2878</div>
<div class="cell r" style="left:703px;top:862px;width:132px;height:17px;line-height:17px;padding:0 4px 0 3px;padding-right:6px">350.000</div>
<div class="cell r" style="left:835px;top:862px;width:127px;height:17px;line-height:17px;padding:0 4px 0 3px;padding-right:6px">-</div>
<div class="cell r" style="left:962px;top:862px;width:130px;height:17px;line-height:17px;padding:0 4px 0 3px;padding-right:2px">5.445.515,00</div>
<div class="cell r" style="left:1207px;top:862px;width:115px;height:17px;line-height:17px;padding:0 4px 0 3px;padding-right:7px">350.000,00</div>
<div class="cell r" style="left:26px;top:879px;width:27px;height:17px;line-height:17px;padding:0 4px 0 3px;padding-right:3px">33</div>
<div class="cell r" style="left:53px;top:879px;width:35px;height:17px;line-height:17px;padding:0 4px 0 3px;padding-right:2px">9</div>
<div class="cell " style="left:88px;top:879px;width:68px;height:17px;line-height:17px;padding:0 4px 0 3px;">September</div>
<div class="cell " style="left:156px;top:879px;width:114px;height:17px;line-height:17px;padding:0 4px 0 3px;">SDL-BM-0925-018</div>
<div class="cell " style="left:270px;top:879px;width:70px;height:17px;line-height:17px;padding:0 4px 0 3px;">4000.01</div>
<div class="cell " style="left:340px;top:879px;width:78px;height:17px;line-height:17px;padding:0 4px 0 3px;">24/09/2025</div>
<div class="cell " style="left:418px;top:879px;width:285px;height:17px;line-height:17px;padding:0 4px 0 3px;">Pak Juna 2877</div>
<div class="cell r" style="left:703px;top:879px;width:132px;height:17px;line-height:17px;padding:0 4px 0 3px;padding-right:6px">621.000</div>
<div class="cell r" style="left:835px;top:879px;width:127px;height:17px;line-height:17px;padding:0 4px 0 3px;padding-right:6px">-</div>
<div class="cell r" style="left:962px;top:879px;width:130px;height:17px;line-height:17px;padding:0 4px 0 3px;padding-right:2px">6.066.515,00</div>
<div class="cell r" style="left:1207px;top:879px;width:115px;height:17px;line-height:17px;padding:0 4px 0 3px;padding-right:7px">621.000,00</div>
<div class="cell r" style="left:26px;top:896px;width:27px;height:17px;line-height:17px;padding:0 4px 0 3px;padding-right:3px">34</div>
<div class="cell r" style="left:53px;top:896px;width:35px;height:17px;line-height:17px;padding:0 4px 0 3px;padding-right:2px">9</div>
<div class="cell " style="left:88px;top:896px;width:68px;height:17px;line-height:17px;padding:0 4px 0 3px;">September</div>
<div class="cell " style="left:156px;top:896px;width:114px;height:17px;line-height:17px;padding:0 4px 0 3px;">SDL-BM-0925-019</div>
<div class="cell " style="left:270px;top:896px;width:70px;height:17px;line-height:17px;padding:0 4px 0 3px;">4000.01</div>
<div class="cell " style="left:340px;top:896px;width:78px;height:17px;line-height:17px;padding:0 4px 0 3px;">25/09/2025</div>
<div class="cell " style="left:418px;top:896px;width:285px;height:17px;line-height:17px;padding:0 4px 0 3px;">Pak Tata</div>
<div class="cell r" style="left:703px;top:896px;width:132px;height:17px;line-height:17px;padding:0 4px 0 3px;padding-right:6px">3.000.000</div>
<div class="cell r" style="left:835px;top:896px;width:127px;height:17px;line-height:17px;padding:0 4px 0 3px;padding-right:6px">-</div>
<div class="cell r" style="left:962px;top:896px;width:130px;height:17px;line-height:17px;padding:0 4px 0 3px;padding-right:2px">9.066.515,00</div>
<div class="cell r" style="left:1207px;top:896px;width:115px;height:17px;line-height:17px;padding:0 4px 0 3px;padding-right:7px">3.000.000,00</div>
<div class="cell r" style="left:26px;top:913px;width:27px;height:17px;line-height:17px;padding:0 4px 0 3px;padding-right:3px">35</div>
<div class="cell r" style="left:53px;top:913px;width:35px;height:17px;line-height:17px;padding:0 4px 0 3px;padding-right:2px">9</div>
<div class="cell " style="left:88px;top:913px;width:68px;height:17px;line-height:17px;padding:0 4px 0 3px;">September</div>
<div class="cell " style="left:156px;top:913px;width:114px;height:17px;line-height:17px;padding:0 4px 0 3px;">SDL-BK-0925-016</div>
<div class="cell " style="left:270px;top:913px;width:70px;height:17px;line-height:17px;padding:0 4px 0 3px;">2300</div>
<div class="tri" style="left:270px;top:913px"></div>
<div class="cell " style="left:340px;top:913px;width:78px;height:17px;line-height:17px;padding:0 4px 0 3px;">26/09/2025</div>
<div class="cell " style="left:418px;top:913px;width:285px;height:17px;line-height:17px;padding:0 4px 0 3px;">Tarik Tunai</div>
<div class="cell r" style="left:703px;top:913px;width:132px;height:17px;line-height:17px;padding:0 4px 0 3px;padding-right:6px">-</div>
<div class="cell r" style="left:835px;top:913px;width:127px;height:17px;line-height:17px;padding:0 4px 0 3px;padding-right:6px">500.000</div>
<div class="cell r" style="left:962px;top:913px;width:130px;height:17px;line-height:17px;padding:0 4px 0 3px;padding-right:2px">8.566.515,00</div>
<div class="cell r" style="left:1207px;top:913px;width:115px;height:17px;line-height:17px;padding:0 4px 0 3px;padding-right:20px">-</div>
<div class="cell r" style="left:26px;top:930px;width:27px;height:17px;line-height:17px;padding:0 4px 0 3px;padding-right:3px">36</div>
<div class="cell r" style="left:53px;top:930px;width:35px;height:17px;line-height:17px;padding:0 4px 0 3px;padding-right:2px">9</div>
<div class="cell " style="left:88px;top:930px;width:68px;height:17px;line-height:17px;padding:0 4px 0 3px;">September</div>
<div class="cell " style="left:156px;top:930px;width:114px;height:17px;line-height:17px;padding:0 4px 0 3px;">SDL-BK-0925-017</div>
<div class="cell " style="left:270px;top:930px;width:70px;height:17px;line-height:17px;padding:0 4px 0 3px;">2300</div>
<div class="tri" style="left:270px;top:930px"></div>
<div class="cell " style="left:340px;top:930px;width:78px;height:17px;line-height:17px;padding:0 4px 0 3px;">27/09/2025</div>
<div class="cell " style="left:418px;top:930px;width:285px;height:17px;line-height:17px;padding:0 4px 0 3px;">Kasbon Mingguan Riski</div>
<div class="cell r" style="left:703px;top:930px;width:132px;height:17px;line-height:17px;padding:0 4px 0 3px;padding-right:6px">-</div>
<div class="cell r" style="left:835px;top:930px;width:127px;height:17px;line-height:17px;padding:0 4px 0 3px;padding-right:6px">1.500.000</div>
<div class="cell r" style="left:962px;top:930px;width:130px;height:17px;line-height:17px;padding:0 4px 0 3px;padding-right:2px">7.066.515,00</div>
<div class="cell r" style="left:1207px;top:930px;width:115px;height:17px;line-height:17px;padding:0 4px 0 3px;padding-right:20px">-</div>
<div class="cell r" style="left:26px;top:947px;width:27px;height:17px;line-height:17px;padding:0 4px 0 3px;padding-right:3px">37</div>
<div class="cell r" style="left:53px;top:947px;width:35px;height:17px;line-height:17px;padding:0 4px 0 3px;padding-right:2px">9</div>
<div class="cell " style="left:88px;top:947px;width:68px;height:17px;line-height:17px;padding:0 4px 0 3px;">September</div>
<div class="cell " style="left:156px;top:947px;width:114px;height:17px;line-height:17px;padding:0 4px 0 3px;">SDL-BK-0925-018</div>
<div class="cell " style="left:270px;top:947px;width:70px;height:17px;line-height:17px;padding:0 4px 0 3px;">6201.01</div>
<div class="cell " style="left:340px;top:947px;width:78px;height:17px;line-height:17px;padding:0 4px 0 3px;">30/09/2025</div>
<div class="cell " style="left:418px;top:947px;width:285px;height:17px;line-height:17px;padding:0 4px 0 3px;">Sisa Gaji+Bonus Edi</div>
<div class="cell r" style="left:703px;top:947px;width:132px;height:17px;line-height:17px;padding:0 4px 0 3px;padding-right:6px">-</div>
<div class="cell r" style="left:835px;top:947px;width:127px;height:17px;line-height:17px;padding:0 4px 0 3px;padding-right:6px">345.684</div>
<div class="cell r" style="left:962px;top:947px;width:130px;height:17px;line-height:17px;padding:0 4px 0 3px;padding-right:2px">6.720.831,00</div>
<div class="cell r" style="left:1207px;top:947px;width:115px;height:17px;line-height:17px;padding:0 4px 0 3px;padding-right:20px">-</div>
<div class="cell r" style="left:26px;top:964px;width:27px;height:17px;line-height:17px;padding:0 4px 0 3px;padding-right:3px">38</div>
<div class="cell r" style="left:53px;top:964px;width:35px;height:17px;line-height:17px;padding:0 4px 0 3px;padding-right:2px">9</div>
<div class="cell " style="left:88px;top:964px;width:68px;height:17px;line-height:17px;padding:0 4px 0 3px;">September</div>
<div class="cell " style="left:156px;top:964px;width:114px;height:17px;line-height:17px;padding:0 4px 0 3px;">SDL-BK-0925-019</div>
<div class="cell " style="left:270px;top:964px;width:70px;height:17px;line-height:17px;padding:0 4px 0 3px;">6201.01</div>
<div class="cell " style="left:340px;top:964px;width:78px;height:17px;line-height:17px;padding:0 4px 0 3px;">30/09/2025</div>
<div class="cell " style="left:418px;top:964px;width:285px;height:17px;line-height:17px;padding:0 4px 0 3px;">Sisa Gaji+Bonus Subro</div>
<div class="cell r" style="left:703px;top:964px;width:132px;height:17px;line-height:17px;padding:0 4px 0 3px;padding-right:6px">-</div>
<div class="cell r" style="left:835px;top:964px;width:127px;height:17px;line-height:17px;padding:0 4px 0 3px;padding-right:6px">284.263</div>
<div class="cell r" style="left:962px;top:964px;width:130px;height:17px;line-height:17px;padding:0 4px 0 3px;padding-right:2px">6.436.568,00</div>
<div class="cell r" style="left:1207px;top:964px;width:115px;height:17px;line-height:17px;padding:0 4px 0 3px;padding-right:20px">-</div>
<div class="a" style="left:417px;top:453px;width:287px;height:19px;border:2px solid #1e7145"></div>
<div class="a" style="left:700px;top:469px;width:6px;height:6px;background:#1e7145;border:1px solid #fff"></div>
<div class="a" style="left:1899px;top:219px;width:21px;height:759px;background:#151515"></div>
<svg class="a" style="left:1903px;top:222px" width="12" height="10" viewBox="0 0 12 10"><path d="M1.5 9 L6 2.5 L10.5 9 Z" fill="#a8a8a8" stroke="#a8a8a8" stroke-linejoin="round"/></svg>
<div class="a" style="left:1905px;top:237px;width:9px;height:134px;border-radius:5px;background:#9c9c9c"></div>
<svg class="a" style="left:1903px;top:966px" width="12" height="10" viewBox="0 0 12 10"><path d="M1.5 1.5 L6 8 L10.5 1.5 Z" fill="#a8a8a8" stroke="#a8a8a8" stroke-linejoin="round"/></svg>
<div class="a" style="left:1072px;top:212px;width:68px;height:19px;background:#f1f1f1;border:1px solid #d8d8d8;border-radius:3px;box-shadow:0 2px 5px rgba(0,0,0,0.2);font-size:11.6px;color:#222;line-height:17px;text-align:center;white-space:nowrap">Formula Bar</div>
<!-- sheet tab bar -->
<div class="a" style="left:0;top:978px;width:1920px;height:32px;background:#0f1113"></div>
<svg class="a" style="left:28px;top:987px" width="8" height="12" viewBox="0 0 8 12"><path d="M6.5 1 L1.5 6 L6.5 11" stroke="#9a9a9a" fill="none" stroke-width="1.2"/></svg>
<svg class="a" style="left:60px;top:987px" width="8" height="12" viewBox="0 0 8 12"><path d="M1.5 1 L6.5 6 L1.5 11" stroke="#9a9a9a" fill="none" stroke-width="1.2"/></svg>
<div class="tab" style="left:125px">Note</div>
<div class="tsep" style="left:169px"></div>
<div class="a" style="left:173px;top:982px;width:46px;height:24px;background:#f7b500;border-radius:4px"></div>
<div class="tab" style="left:173px;width:46px;text-align:center;color:#1d1500">Final</div>
<div class="tsep" style="left:223px"></div>
<div class="a" style="left:228px;top:982px;width:58px;height:24px;background:#548a35;border-radius:4px"></div>
<div class="tab" style="left:228px;width:58px;text-align:center;color:#f0f0f0">PPh 21</div>
<div class="tsep" style="left:290px"></div>
<div class="a" style="left:295px;top:982px;width:94px;height:24px;background:#6cad47;border-radius:4px"></div>
<div class="tab" style="left:295px;width:94px;text-align:center;color:#10200a">BP21-Kartap</div>
<div class="tsep" style="left:393px"></div>
<div class="tab" style="left:406px">GAJI</div>
<div class="tsep" style="left:447px"></div>
<div class="a" style="left:451px;top:978px;width:118px;height:28px;background:#fff;border-radius:0 0 6px 6px"></div>
<div class="tab" style="left:451px;top:983px;width:118px;text-align:center;color:#2a2a2a;font-weight:bold;font-size:13px">Rekening Koran</div>
<div class="a" style="left:460px;top:1000px;width:101px;height:2px;background:#1e7a4c"></div>
<div class="tsep" style="left:573px"></div>
<div class="tab" style="left:587px">Kas Kecil</div>
<div class="tsep" style="left:654px"></div>
<div class="tab" style="left:668px">Rekap RK</div>
<div class="tsep" style="left:739px"></div>
<div class="tab" style="left:753px">Penjualan</div>
<div class="tsep" style="left:830px"></div>
<svg class="a" style="left:871px;top:987px" width="14" height="14" viewBox="0 0 14 14"><path d="M7 1 V13 M1 7 H13" stroke="#e0e0e0" stroke-width="1.2"/></svg>
<svg class="a" style="left:1153px;top:987px" width="4" height="14" viewBox="0 0 4 14"><circle cx="2" cy="2.5" r="1.1" fill="#ddd"/><circle cx="2" cy="7" r="1.1" fill="#ddd"/><circle cx="2" cy="11.5" r="1.1" fill="#ddd"/></svg>
<svg class="a" style="left:1175px;top:988px" width="10" height="12" viewBox="0 0 10 12"><path d="M8 1 L2 6 L8 11 Z" fill="#9a9a9a"/></svg>
<div class="a" style="left:1188px;top:989px;width:646px;height:9px;border-radius:5px;background:#9c9c9c"></div>
<svg class="a" style="left:1884px;top:988px" width="10" height="12" viewBox="0 0 10 12"><path d="M2 1 L8 6 L2 11 Z" fill="#9a9a9a"/></svg>

<!-- status bar -->
<div class="a" style="left:0;top:1009px;width:1920px;height:1px;background:#2a2a2a"></div>
<div class="a" style="left:0;top:1010px;width:1920px;height:23px;background:#161616"></div>
<div class="a" style="left:11px;top:1015px;font-size:11px;color:#e8e8e8">Ready</div>
<svg class="a" style="left:61px;top:1013px" width="16" height="16" viewBox="0 0 16 16" fill="none" stroke="#ddd" stroke-width="1.1">
 <circle cx="6.5" cy="2.5" r="1.6"/><path d="M1.5 5 L6.5 6 L11.5 5 M6.5 6 V9.5 L3.5 14.5 M6.5 9.5 L8 12"/><path d="M10 10 L15 15 M15 10 L10 15"/>
</svg>
<div class="a" style="left:80px;top:1015px;font-size:11px;letter-spacing:-0.2px;color:#f0f0f0;font-weight:bold;white-space:nowrap">Accessibility: Investigate</div>
<div class="a" style="left:1620px;top:1010px;width:40px;height:23px;background:#262626"></div>
<svg class="a" style="left:1632px;top:1014px" width="15" height="15" viewBox="0 0 15 15" fill="none" stroke="#e6e6e6" stroke-width="1.1">
 <rect x="0.5" y="0.5" width="14" height="14"/><path d="M5.2 0.5 V14.5 M9.8 0.5 V14.5 M0.5 5.2 H14.5 M0.5 9.8 H14.5"/>
</svg>
<svg class="a" style="left:1672px;top:1014px" width="15" height="15" viewBox="0 0 15 15" fill="none" stroke="#e6e6e6" stroke-width="1.1">
 <rect x="0.5" y="0.5" width="14" height="14"/><rect x="3.5" y="3" width="8" height="9"/><path d="M5 5.5 H10 M5 7.5 H10 M5 9.5 H10"/>
</svg>
<svg class="a" style="left:1712px;top:1014px" width="15" height="15" viewBox="0 0 15 15" fill="none" stroke="#e6e6e6" stroke-width="1.1">
 <path d="M0.5 14.5 V0.5 H14.5 V14.5"/><path d="M5 0.5 V8 H10 V0.5"/><path d="M0.5 11 H14.5"/>
</svg>
<div class="a" style="left:1745px;top:1021px;width:9px;height:1px;background:#e0e0e0"></div>
<div class="a" style="left:1760px;top:1021px;width:98px;height:1px;background:#8a8a8a"></div>
<div class="a" style="left:1805px;top:1015px;width:5px;height:12px;background:#c8c8c8"></div>
<svg class="a" style="left:1862px;top:1016px" width="10" height="10" viewBox="0 0 10 10"><path d="M5 0 V10 M0 5 H10" stroke="#e0e0e0" stroke-width="1.1"/></svg>
<div class="a" style="left:1881px;top:1015px;font-size:11.6px;color:#e8e8e8">98%</div>

<!-- taskbar -->
<div class="a" style="left:0;top:1032px;width:1920px;height:48px;background:linear-gradient(90deg,#1c1f22,#1b1e21 50%,#1a1d20)"></div>
<div class="a" style="left:0;top:1032px;width:1920px;height:1px;background:#2b2d30"></div>
<!-- weather -->
<svg class="a" style="left:18px;top:1044px" width="24" height="28" viewBox="0 0 24 28">
 <path d="M2 13 C3 6 13 4 21 10 Z" fill="#7ab4e6"/><path d="M12 11 V22 C12 25 8 25 8 22" stroke="#9a9a9a" stroke-width="1.8" fill="none"/>
</svg>
<div class="a" style="left:30px;top:1039px;width:16px;height:16px;border-radius:8px;background:#f07a86;color:#1a1a1a;font-size:11px;text-align:center;line-height:16px">3</div>
<div class="a" style="left:50px;top:1041px;font-size:12.4px;color:#f2f2f2;white-space:nowrap">Hujan ringan</div>
<div class="a" style="left:50px;top:1057px;font-size:12px;color:#d0d0d0;white-space:nowrap">Pada sore hari</div>
<!-- start -->
<svg class="a" style="left:572px;top:1044px" width="24" height="24" viewBox="0 0 24 24">
 <rect x="0" y="0" width="11.3" height="11.3" fill="#3fb6f5"/><rect x="12.7" y="0" width="11.3" height="11.3" fill="#3fb6f5"/>
 <rect x="0" y="12.7" width="11.3" height="11.3" fill="#2aa2ec"/><rect x="12.7" y="12.7" width="11.3" height="11.3" fill="#2aa2ec"/>
</svg>
<!-- search pill -->
<div class="a" style="left:610px;top:1040px;width:219px;height:32px;border-radius:16px;background:#3a3c40"></div>
<svg class="a" style="left:620px;top:1046px" width="20" height="20" viewBox="0 0 20 20" fill="none" stroke="#e8e8e8" stroke-width="1.8"><circle cx="8.5" cy="8.5" r="6"/><path d="M13 13 L18 18"/></svg>
<div class="a" style="left:646px;top:1048px;font-size:13.6px;color:#d8d8d8">Search</div>
<svg class="a" style="left:780px;top:1040px" width="46" height="32" viewBox="0 0 46 32">
 <path d="M2 30 C8 28 30 26 44 27 L40 31 L6 31 Z" fill="#d9c7a4"/>
 <path d="M5 12 C4 8 8 5 11 7 L15 9 C20 12 28 12 33 14 C36 16 37 20 36 24 L35 29 L33 29 L32 22 L17 22 L15 29 L13 29 L13 20 C11 18 9 14 8 15 C6 16 5 14 5 12 Z" fill="#e6dcea"/>
 <path d="M9 6 L10 3 M11 6 L13 3" stroke="#333" stroke-width="1.2"/>
 <path d="M13 9 L15 17 M17 11 L18 19 M21 12 L22 21 M25 12 L26 21 M29 13 L29 21 M33 15 L32 21" stroke="#2a2a35" stroke-width="1.5"/>
 <path d="M36 17 C38 18 39 22 38 24" stroke="#555" stroke-width="1"/>
</svg>
<!-- taskbar icons -->
<svg class="a" style="left:840px;top:1044px" width="26" height="24" viewBox="0 0 26 24"><rect x="1" y="8" width="15" height="14" fill="#6c6c6c"/><rect x="8" y="2" width="17" height="14" fill="#e8e8e8"/></svg>
<svg class="a" style="left:884px;top:1043px" width="26" height="26" viewBox="0 0 26 26"><path d="M1 3 H10 L12 5 H25 V24 H1 Z" fill="#f3c23c"/><rect x="1" y="8" width="24" height="16" fill="#ffd75a"/><rect x="8" y="18" width="12" height="6" fill="#1e7cd4"/></svg>
<div class="a" style="left:893px;top:1073px;width:7px;height:3px;border-radius:2px;background:#9a9a9a"></div>
<svg class="a" style="left:928px;top:1043px" width="26" height="26" viewBox="0 0 26 26"><circle cx="13" cy="13" r="12" fill="#1b8ae0"/><path d="M5 15 C5 6 20 5 22 13 C20 11 12 10 11 16 C11 20 16 22 22 19 C18 25 6 24 5 15Z" fill="#43d18b"/></svg>
<svg class="a" style="left:972px;top:1043px" width="26" height="26" viewBox="0 0 26 26"><rect x="2" y="7" width="22" height="18" rx="3" fill="#f3f3f3"/><path d="M8 8 V4 H18 V8" stroke="#36a3f0" stroke-width="2" fill="none"/><rect x="8" y="11" width="4.5" height="4.5" fill="#f25022"/><rect x="13.5" y="11" width="4.5" height="4.5" fill="#7fba00"/><rect x="8" y="16.5" width="4.5" height="4.5" fill="#00a4ef"/><rect x="13.5" y="16.5" width="4.5" height="4.5" fill="#ffb900"/></svg>
<svg class="a" style="left:1016px;top:1042px" width="28" height="28" viewBox="0 0 28 28"><circle cx="14" cy="14" r="12" fill="none" stroke="#25c05a" stroke-width="2.6"/><path d="M3 26 L5 19" stroke="#25c05a" stroke-width="2.6"/><path d="M9 9 C10 16 13 18 19 19" stroke="#25c05a" stroke-width="3" fill="none"/></svg>
<div class="a" style="left:1030px;top:1039px;width:16px;height:16px;border-radius:8px;background:#40a8e8;color:#fff;font-size:10px;text-align:center;line-height:16px">1</div>
<div class="a" style="left:1026px;top:1073px;width:7px;height:3px;border-radius:2px;background:#9a9a9a"></div>
<svg class="a" style="left:1060px;top:1043px" width="26" height="26" viewBox="0 0 26 26"><circle cx="13" cy="13" r="12" fill="#e84335"/><path d="M13 13 L23.4 7 A12 12 0 0 1 13 25 Z" fill="#fbbc05"/><path d="M13 13 L13 25 A12 12 0 0 1 2.6 7 Z" fill="#34a853"/><circle cx="13" cy="13" r="5.5" fill="#fff"/><circle cx="13" cy="13" r="4.2" fill="#4285f4"/></svg>
<div class="a" style="left:1076px;top:1039px;width:14px;height:14px;border-radius:7px;background:#5a4038;color:#fff;font-size:10px;text-align:center;line-height:14px">k</div>
<div class="a" style="left:1069px;top:1073px;width:7px;height:3px;border-radius:2px;background:#9a9a9a"></div>
<svg class="a" style="left:1104px;top:1043px" width="26" height="26" viewBox="0 0 26 26"><rect x="1" y="2" width="17" height="15" fill="#f5f5f5"/><rect x="4" y="5" width="11" height="9" fill="none" stroke="#d94a2a" stroke-width="1.6" stroke-dasharray="2 1.5"/><path d="M14 12 L16 20 M20 12 L16 20" stroke="#999" stroke-width="1.5"/><circle cx="14" cy="22" r="2.4" fill="none" stroke="#2f8fe0" stroke-width="1.5"/><circle cx="22" cy="18" r="2.4" fill="none" stroke="#2f8fe0" stroke-width="1.5"/></svg>
<svg class="a" style="left:1150px;top:1043px" width="22" height="26" viewBox="0 0 22 26"><rect x="1" y="1" width="20" height="24" rx="1.5" fill="#7a7a7a"/><rect x="3" y="3" width="16" height="4" fill="#6ec6f0"/><g fill="#d8d8d8"><rect x="3" y="9" width="4.5" height="4"/><rect x="9" y="9" width="4.5" height="4"/><rect x="3" y="14.5" width="4.5" height="4"/><rect x="9" y="14.5" width="4.5" height="4"/><rect x="3" y="20" width="4.5" height="3.5"/><rect x="9" y="20" width="4.5" height="3.5"/></g><rect x="15" y="9" width="4" height="14.5" fill="#1e63c8"/></svg>
<svg class="a" style="left:1195px;top:1043px" width="20" height="26" viewBox="0 0 20 26"><rect x="1" y="2" width="18" height="23" fill="#5cc2f2"/><path d="M4 8 H16 M4 12 H16 M4 16 H16 M4 20 H16" stroke="#1f6fb0" stroke-width="1.5"/><rect x="1" y="23" width="18" height="2" fill="#f0a040"/></svg>
<svg class="a" style="left:1237px;top:1043px" width="26" height="26" viewBox="0 0 26 26"><circle cx="13" cy="13" r="12" fill="#e23b48"/><path d="M7 19 L13 6 L19 19" stroke="#fff" stroke-width="2.4" fill="none"/></svg>
<div class="a" style="left:1245px;top:1073px;width:7px;height:3px;border-radius:2px;background:#9a9a9a"></div>
<div class="a" style="left:1273px;top:1036px;width:38px;height:42px;border-radius:5px;background:#2a2d31"></div>
<svg class="a" style="left:1279px;top:1043px" width="26" height="26" viewBox="0 0 26 26"><rect x="5" y="1" width="20" height="24" rx="2" fill="#20a35a"/><rect x="5" y="1" width="20" height="8" fill="#4fd685"/><rect x="15" y="9" width="10" height="16" fill="#107c41"/><rect x="1" y="12" width="12" height="12" rx="1.5" fill="#0e6b38"/><path d="M4 15 L10 21 M10 15 L4 21" stroke="#fff" stroke-width="1.6"/></svg>
<div class="a" style="left:1283px;top:1073px;width:17px;height:3px;border-radius:2px;background:#4cb0f0"></div>
<svg class="a" style="left:1323px;top:1045px" width="26" height="22" viewBox="0 0 26 22"><rect x="1" y="1" width="24" height="20" rx="1.5" fill="#505050"/><rect x="1" y="1" width="24" height="3" fill="#8a8a8a"/><path d="M5 8 L10 12 L5 16" stroke="#fff" stroke-width="1.8" fill="none"/><path d="M12 16 H19" stroke="#fff" stroke-width="1.8"/></svg>
<div class="a" style="left:1333px;top:1073px;width:7px;height:3px;border-radius:2px;background:#9a9a9a"></div>
<!-- tray -->
<svg class="a" style="left:1694px;top:1051px" width="14" height="9" viewBox="0 0 14 9"><path d="M1 8 L7 2 L13 8" stroke="#eee" stroke-width="1.5" fill="none"/></svg>
<svg class="a" style="left:1725px;top:1047px" width="20" height="18" viewBox="0 0 20 18"><path d="M4 14 C0 14 0 8 4 8 C4 3 11 2 13 6 C17 5 19 9 17 12 C17 14 16 14 14 14 Z" fill="#8a8a8a"/><path d="M2 2 L17 17" stroke="#ddd" stroke-width="1.3"/></svg>
<svg class="a" style="left:1758px;top:1045px" width="20" height="20" viewBox="0 0 20 20" fill="none" stroke="#eee" stroke-width="1.3"><rect x="1" y="2" width="13" height="11"/><path d="M5 17 H11 M8 13 V17"/><rect x="15" y="1" width="3.5" height="6"/><path d="M16.7 7 V18"/></svg>
<svg class="a" style="left:1781px;top:1046px" width="20" height="18" viewBox="0 0 20 18" fill="none" stroke="#eee" stroke-width="1.3"><path d="M1 6.5 H4.5 L9 2.5 V15.5 L4.5 11.5 H1 Z"/><path d="M12 6 C13.5 7.5 13.5 10.5 12 12 M14.5 4 C17 6.5 17 11.5 14.5 14 M17 2 C20.5 5.5 20.5 12.5 17 16"/></svg>
<div class="a" style="left:1840px;top:1040px;width:38px;font-size:12.4px;color:#f2f2f2;text-align:right">11:03</div>
<div class="a" style="left:1800px;top:1057px;width:78px;font-size:12.4px;color:#f2f2f2;text-align:right">31/01/2026</div>
<svg class="a" style="left:1884px;top:1045px" width="18" height="20" viewBox="0 0 18 20"><path d="M3 15 V9 C3 5 5 3 8.5 3 C12 3 14 5 14 9 V15 L16 16.5 H1 Z" fill="#eee"/><circle cx="8.5" cy="18" r="1.8" fill="#eee"/><text x="5" y="13" font-size="7" font-family="Liberation Sans" fill="#222">z</text><text x="12" y="6" font-size="6" font-family="Liberation Sans" fill="#eee">z</text></svg>

</body></html>
